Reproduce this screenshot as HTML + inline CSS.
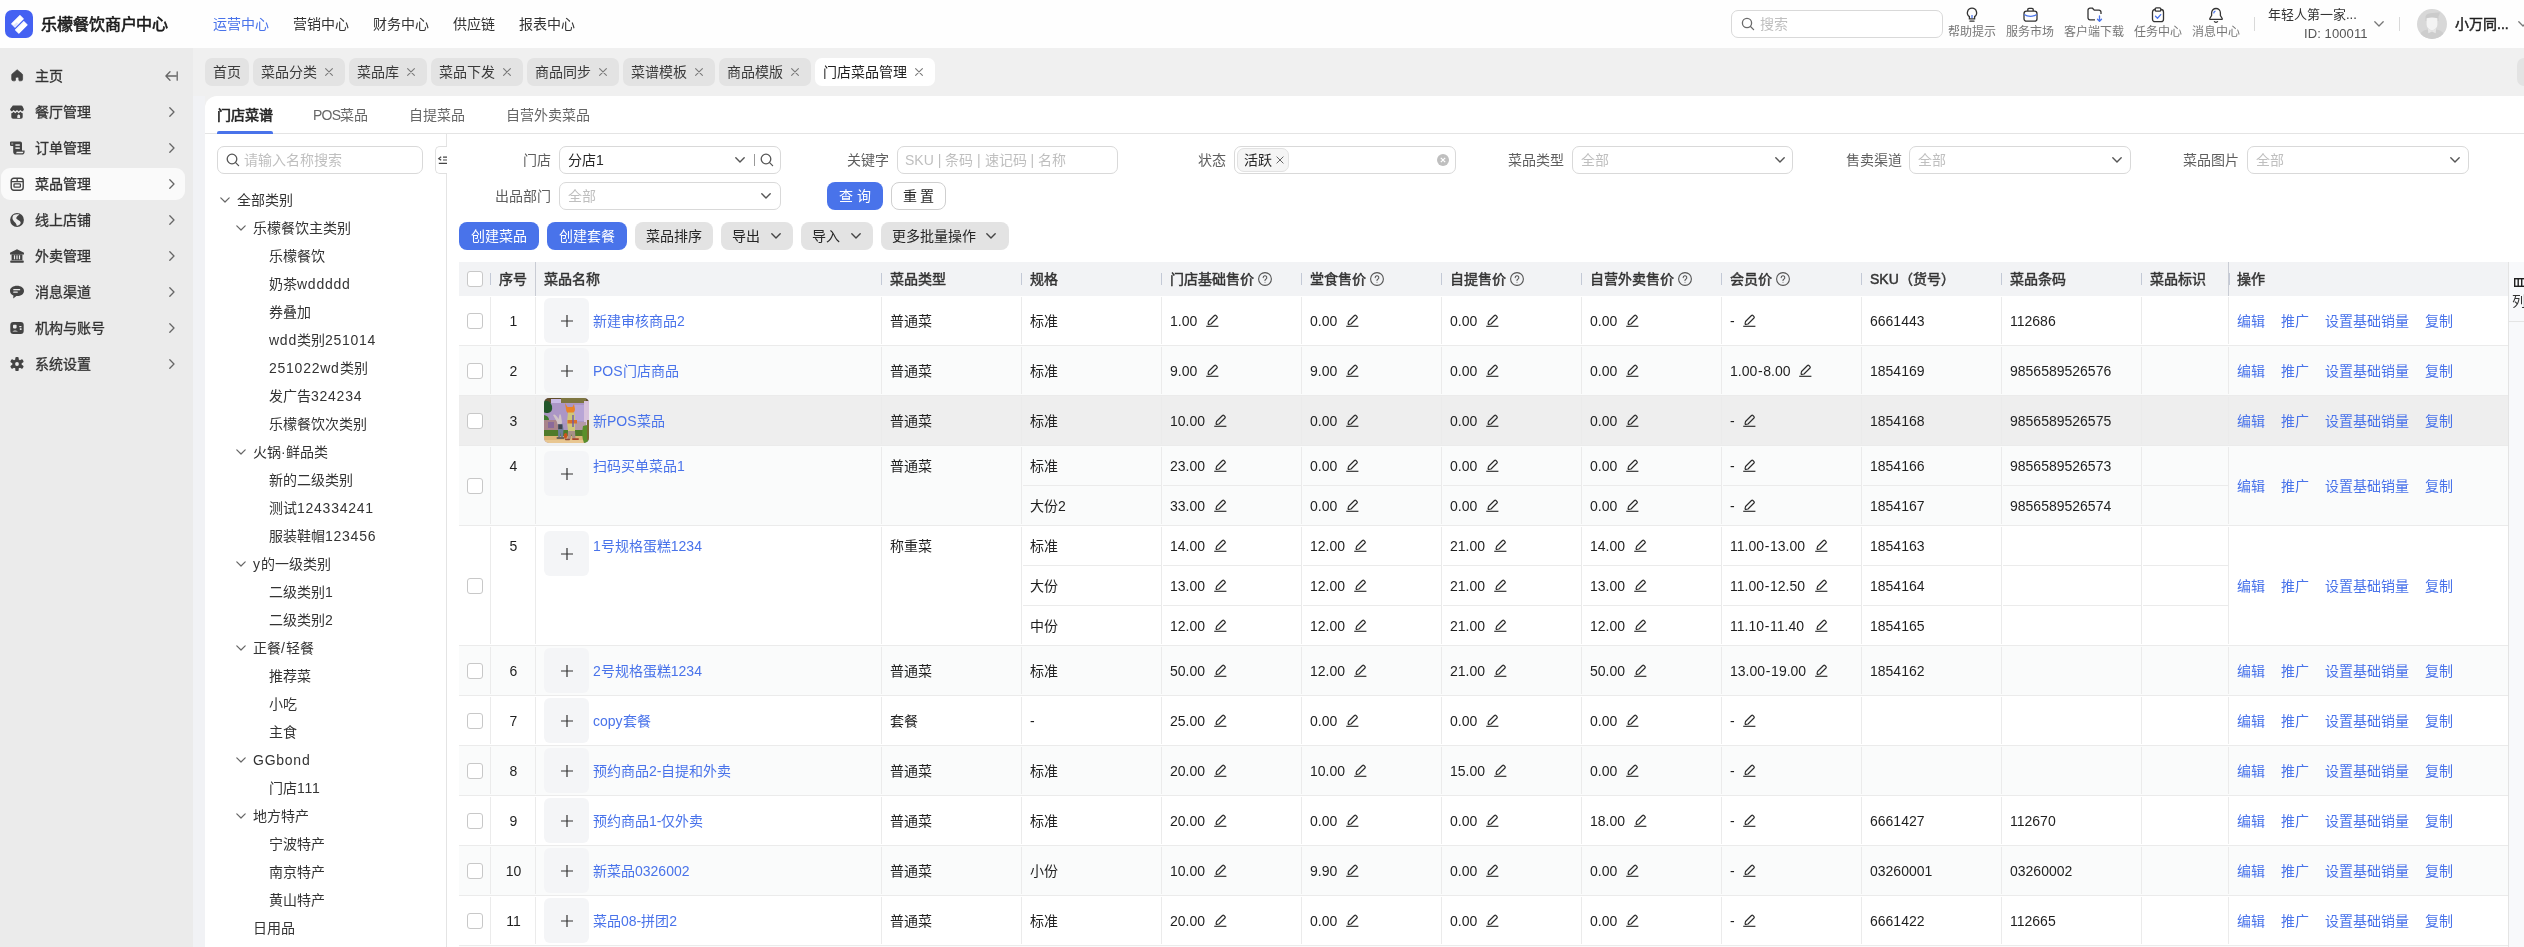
<!DOCTYPE html><html lang="zh-CN"><head><meta charset="utf-8"><title>page</title><style>
*{box-sizing:border-box;margin:0;padding:0}
html,body{width:2524px;height:947px;overflow:hidden;background:#fff}
body{font-family:"Liberation Sans",sans-serif;font-size:14px;color:#1f1f1f;position:relative;opacity:.999}
.a{position:absolute;white-space:nowrap}
.t{position:absolute;white-space:nowrap;line-height:20px;height:20px}
.hdr{left:0;top:0;width:2524px;height:48px;background:#fefefe}
.side{left:0;top:48px;width:193px;height:899px;background:#ebebeb}
.tabbar{left:193px;top:48px;width:2331px;height:48px;background:#f0f0f0}
.gap{left:193px;top:96px;width:12px;height:851px;background:#f1f2f5}
.panelbg{left:205px;top:96px;width:30px;height:30px;background:#f0f0f0}
.panel{left:205px;top:96px;width:2319px;height:851px;background:#fff;border-top-left-radius:12px}
.chip{position:absolute;top:58px;height:28px;border-radius:7px;background:#e3e3e3;color:#3a3a3a;line-height:28px;padding-left:8px;white-space:nowrap}
.chip.on{background:#fff;color:#1f1f1f}
.inp{position:absolute;height:27px;border:1px solid #d9d9d9;border-radius:7px;background:#fff}
.ph{color:#bfbfbf}
.lbl{position:absolute;color:#5e5e5e;text-align:right;line-height:20px;white-space:nowrap}
.btn{position:absolute;height:28px;border-radius:8px;line-height:28px;text-align:center;white-space:nowrap}
.btn.p{background:#4973ea;color:#fff}
.btn.g{background:#e3e3e3;color:#262626}
.th{position:absolute;top:262px;height:34px;line-height:34px;color:#333;-webkit-text-stroke:0.45px #333;white-space:nowrap}
.md{-webkit-text-stroke:0.3px currentColor}
.sb{-webkit-text-stroke:0.6px currentColor}
.cb{position:absolute;width:16px;height:16px;border:1px solid #c8c8c8;border-radius:3px;background:#fff}
.lnk{color:#4973ea}
.plus{position:absolute;width:45px;height:45px;border-radius:6px;background:#f4f5f7}
.vl{position:absolute;width:1px;background:#ebebeb}
.hl{position:absolute;height:1px;background:#ebebeb}
svg{position:absolute;overflow:visible}
</style></head><body>
<div class="a hdr"></div><div class="a side"></div><div class="a tabbar"></div><div class="a gap"></div><div class="a panelbg"></div><div class="a panel"></div>
<div class="a" style="left:5px;top:10px;width:28px;height:28px;border-radius:7px;background:#4461f2"></div>
<svg style="left:3.600px;top:8.800px" width="30.800" height="30.800" viewBox="0 0 28 28"><path d="M7 13.5 L14.5 6 L17.5 9 L10 16.5 Z" fill="#fff" stroke="#fff" stroke-width="1" stroke-linejoin="round"/><path d="M10.5 19 L18 11.5 L21 14.5 L13.5 22 Z" fill="#fff" stroke="#fff" stroke-width="1" stroke-linejoin="round"/><path d="M7 13.5 L10 16.5 L13 13.5 L11.5 12 L9 14.5Z" fill="#c9d2ff" opacity=".6"/></svg>
<div class="t sb" style="left:41px;top:15px;font-size:16px;color:#1a1a1a;letter-spacing:-0.1px">乐檬餐饮商户中心</div>
<div class="t" style="left:213px;top:14px;color:#4973ea">运营中心</div>
<div class="t" style="left:293px;top:14px;color:#333">营销中心</div>
<div class="t" style="left:373px;top:14px;color:#333">财务中心</div>
<div class="t" style="left:453px;top:14px;color:#333">供应链</div>
<div class="t" style="left:519px;top:14px;color:#333">报表中心</div>
<div class="inp" style="left:1731px;top:10px;width:212px;height:28px;border-radius:7px"></div>
<svg style="left:1741px;top:17px" width="14" height="14" viewBox="0 0 14 14" fill="none" stroke="#6a6a6a" stroke-width="1.300"><circle cx="6" cy="6" r="4.6"/><path d="M9.5 9.5L12.6 12.6" stroke-linecap="round"/></svg>
<div class="t ph" style="left:1760px;top:14px">搜索</div>
<div class="t" style="left:1948px;top:23px;font-size:12px;color:#777;line-height:18px">帮助提示</div>
<div class="t" style="left:2006px;top:23px;font-size:12px;color:#777;line-height:18px">服务市场</div>
<div class="t" style="left:2064px;top:23px;font-size:12px;color:#777;line-height:18px">客户端下载</div>
<div class="t" style="left:2134px;top:23px;font-size:12px;color:#777;line-height:18px">任务中心</div>
<div class="t" style="left:2192px;top:23px;font-size:12px;color:#777;line-height:18px">消息中心</div>
<svg style="left:1965px;top:7px" width="14" height="16" viewBox="0 0 14 16" fill="none" stroke="#333" stroke-width="1.3"><path d="M7 1.2a4.6 4.6 0 0 0-2.6 8.4v2.2h5.2V9.6A4.6 4.6 0 0 0 7 1.2z"/><path d="M5 14.2h4" stroke-linecap="round"/><path d="M7 8v3" stroke="#4973ea"/></svg>
<svg style="left:2023px;top:7px" width="15" height="16" viewBox="0 0 15 16" fill="none" stroke="#333" stroke-width="1.3"><rect x="1" y="4.2" width="13" height="10" rx="2.5"/><path d="M4.8 4V2.6a1.2 1.2 0 0 1 1.2-1.2h3a1.2 1.2 0 0 1 1.2 1.2V4"/><path d="M1.2 7.5c2 1.3 4 1.8 6.300 1.800s4.300-.5 6.300-1.800" stroke="#4973ea"/></svg>
<svg style="left:2087px;top:7px" width="16" height="16" viewBox="0 0 16 16" fill="none" stroke="#333" stroke-width="1.3"><path d="M8 12.800H3a2 2 0 0 1-2-2V3.200a2 2 0 0 1 2-2h2.500l1.800 2H12a2 2 0 0 1 2 2V7"/><path d="M12.500 9v5M10.500 12.200l2 2 2-2" stroke="#4973ea" stroke-linecap="round" stroke-linejoin="round"/></svg>
<svg style="left:2151px;top:7px" width="14" height="16" viewBox="0 0 14 16" fill="none" stroke="#333" stroke-width="1.3"><rect x="1.500" y="2.500" width="11" height="12.200" rx="2.500"/><rect x="4.200" y="0.800" width="5.600" height="3.400" rx="1.200" fill="#fff"/><path d="M4.500 9.200l2 2 3.200-3.600" stroke="#4973ea" stroke-linecap="round" stroke-linejoin="round"/></svg>
<svg style="left:2208px;top:7px" width="16" height="16" viewBox="0 0 16 16" fill="none" stroke="#333" stroke-width="1.3"><path d="M8 1.500a4.400 4.400 0 0 0-4.400 4.400v2.600L1.800 11.500v0.800h12.400v-.8L12.400 8.500V5.900A4.400 4.400 0 0 0 8 1.500z" stroke-linejoin="round"/><path d="M6.200 14.200a2 2 0 0 0 3.600 0"/><path d="M7 4.200a2.400 2.400 0 0 0-1.200 1.600" stroke="#4973ea" stroke-linecap="round"/></svg>
<div class="a" style="left:2254px;top:17px;width:1px;height:14px;background:#d9d9d9"></div>
<div class="t" style="left:2268px;top:6px;font-size:13px;color:#333;line-height:18px">年轻人第一家...</div>
<div class="t" style="left:2304px;top:25px;font-size:13px;color:#555;line-height:18px;letter-spacing:0.1px">ID: 100011</div>
<svg style="left:2374px;top:21px" width="10" height="6" viewBox="0 0 10 6" fill="none" stroke="#777" stroke-width="1.3"><path d="M0.800 0.800L5 5l4.200-4.200" stroke-linecap="round" stroke-linejoin="round"/></svg>
<div class="a" style="left:2399px;top:17px;width:1px;height:14px;background:#d9d9d9"></div>
<svg style="left:2417px;top:9px" width="30" height="30" viewBox="0 0 30 30"><defs><clipPath id="av"><circle cx="15" cy="15" r="15"/></clipPath></defs><g clip-path="url(#av)"><rect width="30" height="30" fill="#d8d8d8"/><path d="M8.500 9.500Q8 4.500 13 4.300L23 3.200Q22.500 6 21.500 7.500L21.500 12H8.500Z" fill="#cbcbcb"/><path d="M9.600 9.200Q15 7.600 20.400 9.200L20.400 15.500Q20.400 19.500 15 21.500Q9.600 19.500 9.600 15.500Z" fill="#f3f3f3"/><path d="M2 30Q2 21.500 10.500 20.500L15 22.500L19.500 20.500Q28 21.500 28 30Z" fill="#cdcdcd"/><path d="M10.800 19.600L15 21.800L19.200 19.600L18.600 24.200L15 22.600L11.400 24.200Z" fill="#e6e6e6"/></g></svg>
<div class="t" style="left:2455px;top:14px;color:#1f1f1f;-webkit-text-stroke:.45px #1f1f1f">小万同...</div>
<svg style="left:2518px;top:21px" width="10" height="6" viewBox="0 0 10 6" fill="none" stroke="#777" stroke-width="1.3"><path d="M0.800 0.800L5 5l4.200-4.200" stroke-linecap="round" stroke-linejoin="round"/></svg>
<div class="a" style="left:1px;top:168px;width:184px;height:32px;border-radius:9px;background:#fafafa"></div>
<svg style="left:10.900px;top:69px" width="12.300" height="12.800" viewBox="0 0 14 14"><path d="M7 .6L12.700 5.300Q13.200 5.800 13.200 6.600V11.400Q13.200 13.200 11.400 13.200H9.800Q8.900 13.200 8.900 12.300V10.700Q8.900 8.900 7 8.900Q5.100 8.900 5.100 10.700V12.300Q5.100 13.200 4.200 13.200H2.600Q.8 13.200 .8 11.400V6.600Q.8 5.800 1.300 5.300Z" fill="#444" stroke="#444" stroke-width=".8" stroke-linejoin="round"/></svg>
<div class="t md" style="left:35px;top:66px;color:#333">主页</div>
<svg style="left:165px;top:71px" width="13" height="10" viewBox="0 0 13 10" fill="none" stroke="#666" stroke-width="1.300"><path d="M5 .8L.9 5 5 9.200M1 5h10M12.200 .8v8.400" stroke-linecap="round" stroke-linejoin="round"/></svg>
<svg style="left:10px;top:105px" width="14" height="14" viewBox="0 0 14 14"><path d="M2.800 .4H11.200Q12.100 .4 12.500 1.200L13.800 4Q14.100 4.900 13.400 5.500L12.100 6.600 10.400 5.100 8.700 6.600 7 5.100 5.300 6.600 3.600 5.100 1.900 6.600 .6 5.500Q-.1 4.900 .2 4Z" fill="#444"/><path d="M1.300 7.900L1.900 8.300 3.600 6.800 5.300 8.300 7 6.800 8.700 8.300 10.400 6.800 12.100 8.300 12.700 7.900V12Q12.700 13.800 10.900 13.800H3.100Q1.300 13.800 1.300 12Z" fill="#444"/><path d="M7.300 13V10.400L8.700 9.300 10.100 10.400V13Z" fill="#ebebeb"/></svg>
<div class="t md" style="left:35px;top:102px;color:#333">餐厅管理</div>
<svg style="left:169px;top:107px" width="6" height="10" viewBox="0 0 6 10" fill="none" stroke="#666" stroke-width="1.300"><path d="M.8.800L5 5 .8 9.200" stroke-linecap="round" stroke-linejoin="round"/></svg>
<svg style="left:10px;top:141px" width="14" height="14" viewBox="0 0 14 14"><path d="M0 1.600Q0 .4 1.200 .4H10.200Q12 .4 12 2.200V9.400H14.600V10.800Q14.600 13.600 11.800 13.600H6Q3.200 13.600 3.200 10.800V5H1.200Q0 5 0 3.800Z" fill="#444"/><path d="M1.300 1.700V3.800H3.200V1.700Z" fill="#8a8a8a"/><rect x="5.400" y="3.300" width="4.400" height="1.500" fill="#ebebeb"/><rect x="5.400" y="6.400" width="4.400" height="1.500" fill="#ebebeb"/><path d="M6.600 10.800H13.300V11Q13.300 12.300 12 12.300H5.800Q6.600 11.800 6.600 10.800Z" fill="#ebebeb"/></svg>
<div class="t md" style="left:35px;top:138px;color:#333">订单管理</div>
<svg style="left:169px;top:143px" width="6" height="10" viewBox="0 0 6 10" fill="none" stroke="#666" stroke-width="1.300"><path d="M.8.800L5 5 .8 9.200" stroke-linecap="round" stroke-linejoin="round"/></svg>
<svg style="left:10px;top:177px" width="14" height="14" viewBox="0 0 14 14"><rect x="1.200" y="1.200" width="12" height="12" rx="2.600" fill="none" stroke="#444" stroke-width="1.400"/><path d="M1.200 4.700h12M7.200 1.200v3.500" stroke="#444" stroke-width="1.300"/><rect x="4" y="6.800" width="6.400" height="3.400" rx=".8" fill="none" stroke="#444" stroke-width="1.300"/></svg>
<div class="t md" style="left:35px;top:174px;color:#333">菜品管理</div>
<svg style="left:169px;top:179px" width="6" height="10" viewBox="0 0 6 10" fill="none" stroke="#666" stroke-width="1.300"><path d="M.8.800L5 5 .8 9.200" stroke-linecap="round" stroke-linejoin="round"/></svg>
<svg style="left:10px;top:213px" width="14" height="14" viewBox="0 0 14 14"><circle cx="7" cy="7" r="6.900" fill="#444"/><path d="M3.600 1.900C5 1.300 7.800 .9 9.400 1.400 8.200 2.400 6.600 3.400 6.300 4.800 6.100 6.200 7.600 6.600 8.900 7.400 10.200 8.200 11 9 10.600 10.200 10.200 11.600 8.400 12.600 6.800 12.900 6.800 11.400 5.800 10.400 4.800 9.200 3.600 7.800 2.200 6.600 2.400 4.800 2.500 3.600 2.900 2.600 3.600 1.900Z" fill="#ebebeb"/></svg>
<div class="t md" style="left:35px;top:210px;color:#333">线上店铺</div>
<svg style="left:169px;top:215px" width="6" height="10" viewBox="0 0 6 10" fill="none" stroke="#666" stroke-width="1.300"><path d="M.8.800L5 5 .8 9.200" stroke-linecap="round" stroke-linejoin="round"/></svg>
<svg style="left:10px;top:249px" width="14" height="14" viewBox="0 0 14 14"><path d="M7 .2L13.600 3.600Q14 3.900 14 4.400V5.400H0V4.400Q0 3.900 .4 3.600Z" fill="#444"/><rect x="1.600" y="5.400" width="10.800" height="5.800" fill="#444"/><rect x="3.900" y="6.300" width="1.200" height="4" fill="#ebebeb"/><rect x="6.400" y="6.300" width="1.200" height="4" fill="#ebebeb"/><rect x="8.900" y="6.300" width="1.200" height="4" fill="#ebebeb"/><rect x=".2" y="11.400" width="13.600" height="2.300" rx=".8" fill="#444"/></svg>
<div class="t md" style="left:35px;top:246px;color:#333">外卖管理</div>
<svg style="left:169px;top:251px" width="6" height="10" viewBox="0 0 6 10" fill="none" stroke="#666" stroke-width="1.300"><path d="M.8.800L5 5 .8 9.200" stroke-linecap="round" stroke-linejoin="round"/></svg>
<svg style="left:10px;top:285px" width="14" height="14" viewBox="0 0 14 14"><path d="M7 .8C3 .8 0 2.900 0 5.900 0 7.900 1.400 9.500 3.400 10.400L3.200 13.600 6.400 11C6.600 11 6.800 11 7 11 11 11 14 8.900 14 5.900S11 .8 7 .8Z" fill="#444"/><rect x="3.200" y="3.900" width="7" height="1.300" rx=".5" fill="#ebebeb"/><rect x="3.200" y="6.400" width="4.600" height="1.300" rx=".5" fill="#ebebeb"/></svg>
<div class="t md" style="left:35px;top:282px;color:#333">消息渠道</div>
<svg style="left:169px;top:287px" width="6" height="10" viewBox="0 0 6 10" fill="none" stroke="#666" stroke-width="1.300"><path d="M.8.800L5 5 .8 9.200" stroke-linecap="round" stroke-linejoin="round"/></svg>
<svg style="left:10px;top:321px" width="14" height="14" viewBox="0 0 14 14"><rect x=".3" y="1" width="13.400" height="12" rx="3" fill="#444"/><rect x="3" y="3.800" width="3.600" height="3.600" rx=".8" fill="#ebebeb"/><path d="M2.400 10.600Q4.800 8.600 8 10.600Z" fill="#ebebeb"/><rect x="9.200" y="5" width="2.400" height="1.200" rx=".4" fill="#ebebeb"/><rect x="9.800" y="7.200" width="1.800" height="1.800" rx=".4" fill="#ebebeb"/></svg>
<div class="t md" style="left:35px;top:318px;color:#333">机构与账号</div>
<svg style="left:169px;top:323px" width="6" height="10" viewBox="0 0 6 10" fill="none" stroke="#666" stroke-width="1.300"><path d="M.8.800L5 5 .8 9.200" stroke-linecap="round" stroke-linejoin="round"/></svg>
<svg style="left:10px;top:357px" width="14" height="14" viewBox="0 0 14 14"><g fill="#444"><circle cx="7" cy="7" r="4.700"/><rect x="5.300" y="-.1" width="3.400" height="14.200" rx="1.200"/><rect x="5.300" y="-.1" width="3.400" height="14.200" rx="1.200" transform="rotate(60 7 7)"/><rect x="5.300" y="-.1" width="3.400" height="14.200" rx="1.200" transform="rotate(120 7 7)"/></g><circle cx="7" cy="7" r="1.900" fill="#ebebeb"/></svg>
<div class="t md" style="left:35px;top:354px;color:#333">系统设置</div>
<svg style="left:169px;top:359px" width="6" height="10" viewBox="0 0 6 10" fill="none" stroke="#666" stroke-width="1.300"><path d="M.8.800L5 5 .8 9.200" stroke-linecap="round" stroke-linejoin="round"/></svg>
<div class="chip" style="left:205px;width:44px">首页</div>
<div class="chip" style="left:253px;width:92px">菜品分类</div>
<svg style="left:325px;top:68px" width="8" height="8" viewBox="0 0 8 8" fill="none" stroke="#7a7a7a" stroke-width="1.100"><path d="M.6.600l6.800 6.800M7.400.600L.6 7.400" stroke-linecap="round"/></svg>
<div class="chip" style="left:349px;width:78px">菜品库</div>
<svg style="left:407px;top:68px" width="8" height="8" viewBox="0 0 8 8" fill="none" stroke="#7a7a7a" stroke-width="1.100"><path d="M.6.600l6.800 6.800M7.400.600L.6 7.400" stroke-linecap="round"/></svg>
<div class="chip" style="left:431px;width:92px">菜品下发</div>
<svg style="left:503px;top:68px" width="8" height="8" viewBox="0 0 8 8" fill="none" stroke="#7a7a7a" stroke-width="1.100"><path d="M.6.600l6.800 6.800M7.400.600L.6 7.400" stroke-linecap="round"/></svg>
<div class="chip" style="left:527px;width:92px">商品同步</div>
<svg style="left:599px;top:68px" width="8" height="8" viewBox="0 0 8 8" fill="none" stroke="#7a7a7a" stroke-width="1.100"><path d="M.6.600l6.800 6.800M7.400.600L.6 7.400" stroke-linecap="round"/></svg>
<div class="chip" style="left:623px;width:92px">菜谱模板</div>
<svg style="left:695px;top:68px" width="8" height="8" viewBox="0 0 8 8" fill="none" stroke="#7a7a7a" stroke-width="1.100"><path d="M.6.600l6.800 6.800M7.400.600L.6 7.400" stroke-linecap="round"/></svg>
<div class="chip" style="left:719px;width:92px">商品模版</div>
<svg style="left:791px;top:68px" width="8" height="8" viewBox="0 0 8 8" fill="none" stroke="#7a7a7a" stroke-width="1.100"><path d="M.6.600l6.800 6.800M7.400.600L.6 7.400" stroke-linecap="round"/></svg>
<div class="chip on" style="left:815px;width:120px">门店菜品管理</div>
<svg style="left:915px;top:68px" width="8" height="8" viewBox="0 0 8 8" fill="none" stroke="#7a7a7a" stroke-width="1.100"><path d="M.6.600l6.800 6.800M7.400.600L.6 7.400" stroke-linecap="round"/></svg>
<div class="a" style="left:2517px;top:58px;width:20px;height:28px;border-radius:7px;background:#e3e3e3"></div>
<div class="a" style="left:205px;top:133px;width:2319px;height:1px;background:#e4e4e4"></div>
<div class="t sb" style="left:217px;top:105px;color:#262626">门店菜谱</div>
<div class="a" style="left:217px;top:131px;width:56px;height:3px;background:#4973ea;border-radius:2px 2px 0 0"></div>
<div class="t" style="left:313px;top:105px;color:#666"><span style="letter-spacing:-.8px">POS</span>菜品</div>
<div class="t" style="left:409px;top:105px;color:#666">自提菜品</div>
<div class="t" style="left:506px;top:105px;color:#666">自营外卖菜品</div>
<div class="a" style="left:446px;top:134px;width:1px;height:813px;background:#e4e4e4"></div>
<div class="inp" style="left:217px;top:146px;width:206px;height:28px"></div>
<svg style="left:226px;top:153px" width="14" height="14" viewBox="0 0 14 14" fill="none" stroke="#555" stroke-width="1.300"><circle cx="6" cy="6" r="4.800"/><path d="M9.600 9.600L12.600 12.600" stroke-linecap="round"/></svg>
<div class="t ph" style="left:244px;top:150px">请输入名称搜索</div>
<div class="a" style="left:435px;top:146px;width:12px;height:28px;border:1px solid #e0e0e0;border-right:none;border-radius:5px 0 0 5px;background:#fff"></div>
<svg style="left:438px;top:156px" width="9" height="8" viewBox="0 0 9 8" fill="none" stroke="#444" stroke-width="1.200"><path d="M3.200 .8L.8 2.600 3.200 4.200M5 1.200h4M5 4h4M.8 7.400h8.200"/></svg>
<div class="t" style="left:237px;top:190px;color:#333">全部类别</div>
<svg style="left:220px;top:197px" width="10" height="6" viewBox="0 0 10 6" fill="none" stroke="#666" stroke-width="1.200"><path d="M.8.800L5 5l4.200-4.200" stroke-linecap="round" stroke-linejoin="round"/></svg>
<div class="t" style="left:253px;top:218px;color:#333">乐檬餐饮主类别</div>
<svg style="left:236px;top:225px" width="10" height="6" viewBox="0 0 10 6" fill="none" stroke="#666" stroke-width="1.200"><path d="M.8.800L5 5l4.200-4.200" stroke-linecap="round" stroke-linejoin="round"/></svg>
<div class="t" style="left:269px;top:246px;color:#333">乐檬餐饮</div>
<div class="t" style="left:269px;top:274px;color:#333">奶茶<span style="letter-spacing:.75px">wddddd</span></div>
<div class="t" style="left:269px;top:302px;color:#333">券叠加</div>
<div class="t" style="left:269px;top:330px;color:#333"><span style="letter-spacing:.75px">wdd</span>类别<span style="letter-spacing:.75px">251014</span></div>
<div class="t" style="left:269px;top:358px;color:#333"><span style="letter-spacing:.75px">251022wd</span>类别</div>
<div class="t" style="left:269px;top:386px;color:#333">发广告<span style="letter-spacing:.75px">324234</span></div>
<div class="t" style="left:269px;top:414px;color:#333">乐檬餐饮次类别</div>
<div class="t" style="left:253px;top:442px;color:#333">火锅·鲜品类</div>
<svg style="left:236px;top:449px" width="10" height="6" viewBox="0 0 10 6" fill="none" stroke="#666" stroke-width="1.200"><path d="M.8.800L5 5l4.200-4.200" stroke-linecap="round" stroke-linejoin="round"/></svg>
<div class="t" style="left:269px;top:470px;color:#333">新的二级类别</div>
<div class="t" style="left:269px;top:498px;color:#333">测试<span style="letter-spacing:.75px">124334241</span></div>
<div class="t" style="left:269px;top:526px;color:#333">服装鞋帽<span style="letter-spacing:.75px">123456</span></div>
<div class="t" style="left:253px;top:554px;color:#333"><span style="letter-spacing:.75px">y</span>的一级类别</div>
<svg style="left:236px;top:561px" width="10" height="6" viewBox="0 0 10 6" fill="none" stroke="#666" stroke-width="1.200"><path d="M.8.800L5 5l4.200-4.200" stroke-linecap="round" stroke-linejoin="round"/></svg>
<div class="t" style="left:269px;top:582px;color:#333">二级类别<span style="letter-spacing:.75px">1</span></div>
<div class="t" style="left:269px;top:610px;color:#333">二级类别<span style="letter-spacing:.75px">2</span></div>
<div class="t" style="left:253px;top:638px;color:#333">正餐<span style="letter-spacing:.75px">/</span>轻餐</div>
<svg style="left:236px;top:645px" width="10" height="6" viewBox="0 0 10 6" fill="none" stroke="#666" stroke-width="1.200"><path d="M.8.800L5 5l4.200-4.200" stroke-linecap="round" stroke-linejoin="round"/></svg>
<div class="t" style="left:269px;top:666px;color:#333">推荐菜</div>
<div class="t" style="left:269px;top:694px;color:#333">小吃</div>
<div class="t" style="left:269px;top:722px;color:#333">主食</div>
<div class="t" style="left:253px;top:750px;color:#333"><span style="letter-spacing:.75px">GGbond</span></div>
<svg style="left:236px;top:757px" width="10" height="6" viewBox="0 0 10 6" fill="none" stroke="#666" stroke-width="1.200"><path d="M.8.800L5 5l4.200-4.200" stroke-linecap="round" stroke-linejoin="round"/></svg>
<div class="t" style="left:269px;top:778px;color:#333">门店<span style="letter-spacing:.75px">111</span></div>
<div class="t" style="left:253px;top:806px;color:#333">地方特产</div>
<svg style="left:236px;top:813px" width="10" height="6" viewBox="0 0 10 6" fill="none" stroke="#666" stroke-width="1.200"><path d="M.8.800L5 5l4.200-4.200" stroke-linecap="round" stroke-linejoin="round"/></svg>
<div class="t" style="left:269px;top:834px;color:#333">宁波特产</div>
<div class="t" style="left:269px;top:862px;color:#333">南京特产</div>
<div class="t" style="left:269px;top:890px;color:#333">黄山特产</div>
<div class="t" style="left:253px;top:918px;color:#333">日用品</div>
<div class="lbl" style="left:451px;width:100px;top:150px">门店</div>
<div class="inp" style="left:559px;top:146px;width:222px;height:28px"></div>
<div class="lbl" style="left:789px;width:100px;top:150px">关键字</div>
<div class="inp" style="left:897px;top:146px;width:221px;height:28px"></div>
<div class="lbl" style="left:1126px;width:100px;top:150px">状态</div>
<div class="inp" style="left:1234px;top:146px;width:222px;height:28px"></div>
<div class="lbl" style="left:1464px;width:100px;top:150px">菜品类型</div>
<div class="inp" style="left:1572px;top:146px;width:221px;height:28px"></div>
<div class="lbl" style="left:1802px;width:100px;top:150px">售卖渠道</div>
<div class="inp" style="left:1909px;top:146px;width:222px;height:28px"></div>
<div class="lbl" style="left:2139px;width:100px;top:150px">菜品图片</div>
<div class="inp" style="left:2247px;top:146px;width:222px;height:28px"></div>
<div class="t" style="left:568px;top:150px;color:#262626">分店1</div>
<svg style="left:735px;top:157px" width="10" height="6" viewBox="0 0 10 6" fill="none" stroke="#555" stroke-width="1.400"><path d="M.8.800L5 5l4.200-4.200" stroke-linecap="round" stroke-linejoin="round"/></svg>
<div class="a" style="left:754px;top:154px;width:1px;height:12px;background:#999"></div>
<svg style="left:760px;top:153px" width="14" height="14" viewBox="0 0 14 14" fill="none" stroke="#555" stroke-width="1.300"><circle cx="6" cy="6" r="4.800"/><path d="M9.600 9.600L12.600 12.600" stroke-linecap="round"/></svg>
<div class="t ph" style="left:905px;top:150px">SKU | 条码 | 速记码 | 名称</div>
<div class="a" style="left:1237px;top:148px;width:52px;height:24px;border-radius:7px;background:#f5f5f5;border:1px solid #e2e2e2"></div>
<div class="t" style="left:1244px;top:150px;color:#262626">活跃</div>
<svg style="left:1276px;top:156px" width="8" height="8" viewBox="0 0 8 8" fill="none" stroke="#666" stroke-width="1"><path d="M.6.600l6.800 6.800M7.400.600L.6 7.400"/></svg>
<div class="a" style="left:1437px;top:154px;width:12px;height:12px;border-radius:6px;background:#bfbfbf"></div>
<svg style="left:1440px;top:157px" width="6" height="6" viewBox="0 0 6 6" fill="none" stroke="#fff" stroke-width="1.200"><path d="M.8.800l4.400 4.400M5.200.800L.8 5.200"/></svg>
<div class="t ph" style="left:1581px;top:150px">全部</div>
<svg style="left:1775px;top:157px" width="10" height="6" viewBox="0 0 10 6" fill="none" stroke="#555" stroke-width="1.400"><path d="M.8.800L5 5l4.200-4.200" stroke-linecap="round" stroke-linejoin="round"/></svg>
<div class="t ph" style="left:1918px;top:150px">全部</div>
<svg style="left:2112px;top:157px" width="10" height="6" viewBox="0 0 10 6" fill="none" stroke="#555" stroke-width="1.400"><path d="M.8.800L5 5l4.200-4.200" stroke-linecap="round" stroke-linejoin="round"/></svg>
<div class="t ph" style="left:2256px;top:150px">全部</div>
<svg style="left:2450px;top:157px" width="10" height="6" viewBox="0 0 10 6" fill="none" stroke="#555" stroke-width="1.400"><path d="M.8.800L5 5l4.200-4.200" stroke-linecap="round" stroke-linejoin="round"/></svg>
<div class="lbl" style="left:451px;width:100px;top:186px">出品部门</div>
<div class="inp" style="left:559px;top:182px;width:222px;height:28px"></div>
<div class="t ph" style="left:568px;top:186px">全部</div>
<svg style="left:761px;top:193px" width="10" height="6" viewBox="0 0 10 6" fill="none" stroke="#555" stroke-width="1.400"><path d="M.8.800L5 5l4.200-4.200" stroke-linecap="round" stroke-linejoin="round"/></svg>
<div class="btn p" style="left:827px;top:182px;width:56px">查 询</div>
<div class="btn" style="left:891px;top:182px;width:55px;border:1px solid #cfcfcf;background:#fff;line-height:26px;color:#262626">重 置</div>
<div class="btn p" style="left:459px;top:222px;width:80px">创建菜品</div>
<div class="btn p" style="left:547px;top:222px;width:80px">创建套餐</div>
<div class="btn g" style="left:635px;top:222px;width:78px">菜品排序</div>
<div class="btn g" style="left:721px;top:222px;width:72px;text-align:left;padding-left:11px">导出</div>
<svg style="left:771px;top:233px" width="10" height="6" viewBox="0 0 10 6" fill="none" stroke="#444" stroke-width="1.400"><path d="M.8.800L5 5l4.200-4.200" stroke-linecap="round" stroke-linejoin="round"/></svg>
<div class="btn g" style="left:801px;top:222px;width:72px;text-align:left;padding-left:11px">导入</div>
<svg style="left:851px;top:233px" width="10" height="6" viewBox="0 0 10 6" fill="none" stroke="#444" stroke-width="1.400"><path d="M.8.800L5 5l4.200-4.200" stroke-linecap="round" stroke-linejoin="round"/></svg>
<div class="btn g" style="left:881px;top:222px;width:128px;text-align:left;padding-left:11px">更多批量操作</div>
<svg style="left:986px;top:233px" width="10" height="6" viewBox="0 0 10 6" fill="none" stroke="#444" stroke-width="1.400"><path d="M.8.800L5 5l4.200-4.200" stroke-linecap="round" stroke-linejoin="round"/></svg>
<div class="a" style="left:459px;top:262px;width:2049px;height:34px;background:#f2f3f5"></div>
<div class="a" style="left:459px;top:296px;width:2049px;height:50px;background:#fff"></div>
<div class="hl" style="left:459px;top:345px;width:2049px"></div>
<div class="a" style="left:459px;top:346px;width:2049px;height:50px;background:#fafbfb"></div>
<div class="hl" style="left:459px;top:395px;width:2049px"></div>
<div class="a" style="left:459px;top:396px;width:2049px;height:50px;background:#eeeeee"></div>
<div class="hl" style="left:459px;top:445px;width:2049px"></div>
<div class="a" style="left:459px;top:446px;width:2049px;height:80px;background:#fafbfb"></div>
<div class="hl" style="left:459px;top:525px;width:2049px"></div>
<div class="a" style="left:459px;top:526px;width:2049px;height:120px;background:#fff"></div>
<div class="hl" style="left:459px;top:645px;width:2049px"></div>
<div class="a" style="left:459px;top:646px;width:2049px;height:50px;background:#fafbfb"></div>
<div class="hl" style="left:459px;top:695px;width:2049px"></div>
<div class="a" style="left:459px;top:696px;width:2049px;height:50px;background:#fff"></div>
<div class="hl" style="left:459px;top:745px;width:2049px"></div>
<div class="a" style="left:459px;top:746px;width:2049px;height:50px;background:#fafbfb"></div>
<div class="hl" style="left:459px;top:795px;width:2049px"></div>
<div class="a" style="left:459px;top:796px;width:2049px;height:50px;background:#fff"></div>
<div class="hl" style="left:459px;top:845px;width:2049px"></div>
<div class="a" style="left:459px;top:846px;width:2049px;height:50px;background:#fafbfb"></div>
<div class="hl" style="left:459px;top:895px;width:2049px"></div>
<div class="a" style="left:459px;top:896px;width:2049px;height:50px;background:#fff"></div>
<div class="hl" style="left:459px;top:945px;width:2049px"></div>
<div class="a" style="left:459px;top:946px;width:2049px;height:50px;background:#fafbfb"></div>
<div class="hl" style="left:459px;top:995px;width:2049px"></div>
<div class="vl" style="left:490px;top:297px;height:47px"></div>
<div class="vl" style="left:535px;top:297px;height:47px"></div>
<div class="vl" style="left:881px;top:297px;height:47px"></div>
<div class="vl" style="left:1021px;top:297px;height:47px"></div>
<div class="vl" style="left:1161px;top:297px;height:47px"></div>
<div class="vl" style="left:1301px;top:297px;height:47px"></div>
<div class="vl" style="left:1441px;top:297px;height:47px"></div>
<div class="vl" style="left:1581px;top:297px;height:47px"></div>
<div class="vl" style="left:1721px;top:297px;height:47px"></div>
<div class="vl" style="left:1861px;top:297px;height:47px"></div>
<div class="vl" style="left:2001px;top:297px;height:47px"></div>
<div class="vl" style="left:2141px;top:297px;height:47px"></div>
<div class="vl" style="left:2228px;top:297px;height:47px"></div>
<div class="vl" style="left:490px;top:347px;height:47px"></div>
<div class="vl" style="left:535px;top:347px;height:47px"></div>
<div class="vl" style="left:881px;top:347px;height:47px"></div>
<div class="vl" style="left:1021px;top:347px;height:47px"></div>
<div class="vl" style="left:1161px;top:347px;height:47px"></div>
<div class="vl" style="left:1301px;top:347px;height:47px"></div>
<div class="vl" style="left:1441px;top:347px;height:47px"></div>
<div class="vl" style="left:1581px;top:347px;height:47px"></div>
<div class="vl" style="left:1721px;top:347px;height:47px"></div>
<div class="vl" style="left:1861px;top:347px;height:47px"></div>
<div class="vl" style="left:2001px;top:347px;height:47px"></div>
<div class="vl" style="left:2141px;top:347px;height:47px"></div>
<div class="vl" style="left:2228px;top:347px;height:47px"></div>
<div class="vl" style="left:490px;top:397px;height:47px"></div>
<div class="vl" style="left:535px;top:397px;height:47px"></div>
<div class="vl" style="left:881px;top:397px;height:47px"></div>
<div class="vl" style="left:1021px;top:397px;height:47px"></div>
<div class="vl" style="left:1161px;top:397px;height:47px"></div>
<div class="vl" style="left:1301px;top:397px;height:47px"></div>
<div class="vl" style="left:1441px;top:397px;height:47px"></div>
<div class="vl" style="left:1581px;top:397px;height:47px"></div>
<div class="vl" style="left:1721px;top:397px;height:47px"></div>
<div class="vl" style="left:1861px;top:397px;height:47px"></div>
<div class="vl" style="left:2001px;top:397px;height:47px"></div>
<div class="vl" style="left:2141px;top:397px;height:47px"></div>
<div class="vl" style="left:2228px;top:397px;height:47px"></div>
<div class="vl" style="left:490px;top:447px;height:77px"></div>
<div class="vl" style="left:535px;top:447px;height:77px"></div>
<div class="vl" style="left:881px;top:447px;height:77px"></div>
<div class="vl" style="left:1021px;top:447px;height:77px"></div>
<div class="vl" style="left:1161px;top:447px;height:77px"></div>
<div class="vl" style="left:1301px;top:447px;height:77px"></div>
<div class="vl" style="left:1441px;top:447px;height:77px"></div>
<div class="vl" style="left:1581px;top:447px;height:77px"></div>
<div class="vl" style="left:1721px;top:447px;height:77px"></div>
<div class="vl" style="left:1861px;top:447px;height:77px"></div>
<div class="vl" style="left:2001px;top:447px;height:77px"></div>
<div class="vl" style="left:2141px;top:447px;height:77px"></div>
<div class="vl" style="left:2228px;top:447px;height:77px"></div>
<div class="vl" style="left:490px;top:527px;height:117px"></div>
<div class="vl" style="left:535px;top:527px;height:117px"></div>
<div class="vl" style="left:881px;top:527px;height:117px"></div>
<div class="vl" style="left:1021px;top:527px;height:117px"></div>
<div class="vl" style="left:1161px;top:527px;height:117px"></div>
<div class="vl" style="left:1301px;top:527px;height:117px"></div>
<div class="vl" style="left:1441px;top:527px;height:117px"></div>
<div class="vl" style="left:1581px;top:527px;height:117px"></div>
<div class="vl" style="left:1721px;top:527px;height:117px"></div>
<div class="vl" style="left:1861px;top:527px;height:117px"></div>
<div class="vl" style="left:2001px;top:527px;height:117px"></div>
<div class="vl" style="left:2141px;top:527px;height:117px"></div>
<div class="vl" style="left:2228px;top:527px;height:117px"></div>
<div class="vl" style="left:490px;top:647px;height:47px"></div>
<div class="vl" style="left:535px;top:647px;height:47px"></div>
<div class="vl" style="left:881px;top:647px;height:47px"></div>
<div class="vl" style="left:1021px;top:647px;height:47px"></div>
<div class="vl" style="left:1161px;top:647px;height:47px"></div>
<div class="vl" style="left:1301px;top:647px;height:47px"></div>
<div class="vl" style="left:1441px;top:647px;height:47px"></div>
<div class="vl" style="left:1581px;top:647px;height:47px"></div>
<div class="vl" style="left:1721px;top:647px;height:47px"></div>
<div class="vl" style="left:1861px;top:647px;height:47px"></div>
<div class="vl" style="left:2001px;top:647px;height:47px"></div>
<div class="vl" style="left:2141px;top:647px;height:47px"></div>
<div class="vl" style="left:2228px;top:647px;height:47px"></div>
<div class="vl" style="left:490px;top:697px;height:47px"></div>
<div class="vl" style="left:535px;top:697px;height:47px"></div>
<div class="vl" style="left:881px;top:697px;height:47px"></div>
<div class="vl" style="left:1021px;top:697px;height:47px"></div>
<div class="vl" style="left:1161px;top:697px;height:47px"></div>
<div class="vl" style="left:1301px;top:697px;height:47px"></div>
<div class="vl" style="left:1441px;top:697px;height:47px"></div>
<div class="vl" style="left:1581px;top:697px;height:47px"></div>
<div class="vl" style="left:1721px;top:697px;height:47px"></div>
<div class="vl" style="left:1861px;top:697px;height:47px"></div>
<div class="vl" style="left:2001px;top:697px;height:47px"></div>
<div class="vl" style="left:2141px;top:697px;height:47px"></div>
<div class="vl" style="left:2228px;top:697px;height:47px"></div>
<div class="vl" style="left:490px;top:747px;height:47px"></div>
<div class="vl" style="left:535px;top:747px;height:47px"></div>
<div class="vl" style="left:881px;top:747px;height:47px"></div>
<div class="vl" style="left:1021px;top:747px;height:47px"></div>
<div class="vl" style="left:1161px;top:747px;height:47px"></div>
<div class="vl" style="left:1301px;top:747px;height:47px"></div>
<div class="vl" style="left:1441px;top:747px;height:47px"></div>
<div class="vl" style="left:1581px;top:747px;height:47px"></div>
<div class="vl" style="left:1721px;top:747px;height:47px"></div>
<div class="vl" style="left:1861px;top:747px;height:47px"></div>
<div class="vl" style="left:2001px;top:747px;height:47px"></div>
<div class="vl" style="left:2141px;top:747px;height:47px"></div>
<div class="vl" style="left:2228px;top:747px;height:47px"></div>
<div class="vl" style="left:490px;top:797px;height:47px"></div>
<div class="vl" style="left:535px;top:797px;height:47px"></div>
<div class="vl" style="left:881px;top:797px;height:47px"></div>
<div class="vl" style="left:1021px;top:797px;height:47px"></div>
<div class="vl" style="left:1161px;top:797px;height:47px"></div>
<div class="vl" style="left:1301px;top:797px;height:47px"></div>
<div class="vl" style="left:1441px;top:797px;height:47px"></div>
<div class="vl" style="left:1581px;top:797px;height:47px"></div>
<div class="vl" style="left:1721px;top:797px;height:47px"></div>
<div class="vl" style="left:1861px;top:797px;height:47px"></div>
<div class="vl" style="left:2001px;top:797px;height:47px"></div>
<div class="vl" style="left:2141px;top:797px;height:47px"></div>
<div class="vl" style="left:2228px;top:797px;height:47px"></div>
<div class="vl" style="left:490px;top:847px;height:47px"></div>
<div class="vl" style="left:535px;top:847px;height:47px"></div>
<div class="vl" style="left:881px;top:847px;height:47px"></div>
<div class="vl" style="left:1021px;top:847px;height:47px"></div>
<div class="vl" style="left:1161px;top:847px;height:47px"></div>
<div class="vl" style="left:1301px;top:847px;height:47px"></div>
<div class="vl" style="left:1441px;top:847px;height:47px"></div>
<div class="vl" style="left:1581px;top:847px;height:47px"></div>
<div class="vl" style="left:1721px;top:847px;height:47px"></div>
<div class="vl" style="left:1861px;top:847px;height:47px"></div>
<div class="vl" style="left:2001px;top:847px;height:47px"></div>
<div class="vl" style="left:2141px;top:847px;height:47px"></div>
<div class="vl" style="left:2228px;top:847px;height:47px"></div>
<div class="vl" style="left:490px;top:897px;height:47px"></div>
<div class="vl" style="left:535px;top:897px;height:47px"></div>
<div class="vl" style="left:881px;top:897px;height:47px"></div>
<div class="vl" style="left:1021px;top:897px;height:47px"></div>
<div class="vl" style="left:1161px;top:897px;height:47px"></div>
<div class="vl" style="left:1301px;top:897px;height:47px"></div>
<div class="vl" style="left:1441px;top:897px;height:47px"></div>
<div class="vl" style="left:1581px;top:897px;height:47px"></div>
<div class="vl" style="left:1721px;top:897px;height:47px"></div>
<div class="vl" style="left:1861px;top:897px;height:47px"></div>
<div class="vl" style="left:2001px;top:897px;height:47px"></div>
<div class="vl" style="left:2141px;top:897px;height:47px"></div>
<div class="vl" style="left:2228px;top:897px;height:47px"></div>
<div class="vl" style="left:490px;top:947px;height:47px"></div>
<div class="vl" style="left:535px;top:947px;height:47px"></div>
<div class="vl" style="left:881px;top:947px;height:47px"></div>
<div class="vl" style="left:1021px;top:947px;height:47px"></div>
<div class="vl" style="left:1161px;top:947px;height:47px"></div>
<div class="vl" style="left:1301px;top:947px;height:47px"></div>
<div class="vl" style="left:1441px;top:947px;height:47px"></div>
<div class="vl" style="left:1581px;top:947px;height:47px"></div>
<div class="vl" style="left:1721px;top:947px;height:47px"></div>
<div class="vl" style="left:1861px;top:947px;height:47px"></div>
<div class="vl" style="left:2001px;top:947px;height:47px"></div>
<div class="vl" style="left:2141px;top:947px;height:47px"></div>
<div class="vl" style="left:2228px;top:947px;height:47px"></div>
<div class="a" style="left:490px;top:273px;width:1px;height:12px;background:#c3c9d6"></div>
<div class="a" style="left:535px;top:262px;width:1px;height:34px;background:#c9ccd4"></div>
<div class="a" style="left:881px;top:273px;width:1px;height:12px;background:#c3c9d6"></div>
<div class="a" style="left:1021px;top:273px;width:1px;height:12px;background:#c3c9d6"></div>
<div class="a" style="left:1161px;top:273px;width:1px;height:12px;background:#c3c9d6"></div>
<div class="a" style="left:1301px;top:273px;width:1px;height:12px;background:#c3c9d6"></div>
<div class="a" style="left:1441px;top:273px;width:1px;height:12px;background:#c3c9d6"></div>
<div class="a" style="left:1581px;top:273px;width:1px;height:12px;background:#c3c9d6"></div>
<div class="a" style="left:1721px;top:273px;width:1px;height:12px;background:#c3c9d6"></div>
<div class="a" style="left:1861px;top:273px;width:1px;height:12px;background:#c3c9d6"></div>
<div class="a" style="left:2001px;top:273px;width:1px;height:12px;background:#c3c9d6"></div>
<div class="a" style="left:2141px;top:273px;width:1px;height:12px;background:#c3c9d6"></div>
<div class="a" style="left:2228px;top:262px;width:1px;height:34px;background:#c9ccd4"></div>
<div class="a" style="left:2229px;top:273px;width:1px;height:12px;background:#c3c9d6"></div>
<div class="hl" style="left:1023px;top:485px;width:138px"></div>
<div class="hl" style="left:1163px;top:485px;width:138px"></div>
<div class="hl" style="left:1303px;top:485px;width:138px"></div>
<div class="hl" style="left:1443px;top:485px;width:138px"></div>
<div class="hl" style="left:1583px;top:485px;width:138px"></div>
<div class="hl" style="left:1723px;top:485px;width:138px"></div>
<div class="hl" style="left:1863px;top:485px;width:138px"></div>
<div class="hl" style="left:2003px;top:485px;width:138px"></div>
<div class="hl" style="left:2143px;top:485px;width:85px"></div>
<div class="hl" style="left:1023px;top:565px;width:138px"></div>
<div class="hl" style="left:1163px;top:565px;width:138px"></div>
<div class="hl" style="left:1303px;top:565px;width:138px"></div>
<div class="hl" style="left:1443px;top:565px;width:138px"></div>
<div class="hl" style="left:1583px;top:565px;width:138px"></div>
<div class="hl" style="left:1723px;top:565px;width:138px"></div>
<div class="hl" style="left:1863px;top:565px;width:138px"></div>
<div class="hl" style="left:2003px;top:565px;width:138px"></div>
<div class="hl" style="left:2143px;top:565px;width:85px"></div>
<div class="hl" style="left:1023px;top:605px;width:138px"></div>
<div class="hl" style="left:1163px;top:605px;width:138px"></div>
<div class="hl" style="left:1303px;top:605px;width:138px"></div>
<div class="hl" style="left:1443px;top:605px;width:138px"></div>
<div class="hl" style="left:1583px;top:605px;width:138px"></div>
<div class="hl" style="left:1723px;top:605px;width:138px"></div>
<div class="hl" style="left:1863px;top:605px;width:138px"></div>
<div class="hl" style="left:2003px;top:605px;width:138px"></div>
<div class="hl" style="left:2143px;top:605px;width:85px"></div>
<div class="th" style="left:499px">序号</div>
<div class="th" style="left:544px">菜品名称</div>
<div class="th" style="left:890px">菜品类型</div>
<div class="th" style="left:1030px">规格</div>
<div class="th" style="left:1170px">门店基础售价</div>
<svg style="left:1258px;top:272px" width="14" height="14" viewBox="0 0 14 14" fill="none" stroke="#555" stroke-width="1.100"><circle cx="7" cy="7" r="6.400"/><path d="M5.200 5.600a1.800 1.800 0 1 1 2.600 1.600c-.5.300-.8.600-.8 1.200" stroke-linecap="round"/><circle cx="7" cy="10.200" r=".5" fill="#666" stroke="none"/></svg>
<div class="th" style="left:1310px">堂食售价</div>
<svg style="left:1370px;top:272px" width="14" height="14" viewBox="0 0 14 14" fill="none" stroke="#555" stroke-width="1.100"><circle cx="7" cy="7" r="6.400"/><path d="M5.200 5.600a1.800 1.800 0 1 1 2.600 1.600c-.5.300-.8.600-.8 1.200" stroke-linecap="round"/><circle cx="7" cy="10.200" r=".5" fill="#666" stroke="none"/></svg>
<div class="th" style="left:1450px">自提售价</div>
<svg style="left:1510px;top:272px" width="14" height="14" viewBox="0 0 14 14" fill="none" stroke="#555" stroke-width="1.100"><circle cx="7" cy="7" r="6.400"/><path d="M5.200 5.600a1.800 1.800 0 1 1 2.600 1.600c-.5.300-.8.600-.8 1.200" stroke-linecap="round"/><circle cx="7" cy="10.200" r=".5" fill="#666" stroke="none"/></svg>
<div class="th" style="left:1590px">自营外卖售价</div>
<svg style="left:1678px;top:272px" width="14" height="14" viewBox="0 0 14 14" fill="none" stroke="#555" stroke-width="1.100"><circle cx="7" cy="7" r="6.400"/><path d="M5.200 5.600a1.800 1.800 0 1 1 2.600 1.600c-.5.300-.8.600-.8 1.200" stroke-linecap="round"/><circle cx="7" cy="10.200" r=".5" fill="#666" stroke="none"/></svg>
<div class="th" style="left:1730px">会员价</div>
<svg style="left:1776px;top:272px" width="14" height="14" viewBox="0 0 14 14" fill="none" stroke="#555" stroke-width="1.100"><circle cx="7" cy="7" r="6.400"/><path d="M5.200 5.600a1.800 1.800 0 1 1 2.600 1.600c-.5.300-.8.600-.8 1.200" stroke-linecap="round"/><circle cx="7" cy="10.200" r=".5" fill="#666" stroke="none"/></svg>
<div class="th" style="left:1870px">SKU（货号）</div>
<div class="th" style="left:2010px">菜品条码</div>
<div class="th" style="left:2150px">菜品标识</div>
<div class="th" style="left:2237px">操作</div>
<div class="cb" style="left:467px;top:271px"></div>
<div class="cb" style="left:467px;top:313px"></div>
<div class="t" style="left:491px;width:45px;text-align:center;top:311px">1</div>
<div class="plus" style="left:544px;top:298px"></div>
<svg style="left:560.500px;top:315px" width="12" height="12" viewBox="0 0 12 12" fill="none" stroke="#333" stroke-width="1.200"><path d="M6 0v12M0 6h12"/></svg>
<div class="t lnk" style="left:593px;top:311px">新建审核商品2</div>
<div class="t" style="left:890px;top:311px">普通菜</div>
<div class="t" style="left:1030px;top:311px">标准</div>
<div class="t" style="left:1170px;top:311px">1.00</div>
<svg style="left:1205.7px;top:314.4px" width="12.500" height="13" viewBox="0 0 12.500 13" fill="none" stroke="#2b2b2b" stroke-width="1.150"><path d="M2.100 9.700L2.500 7.500 8.500 1.500a1 1 0 0 1 1.400 0l1.100 1.100a1 1 0 0 1 0 1.400L5 10 2.800 10.400a.6 .6 0 0 1-.7-.7z" stroke-linejoin="round"/><path d="M.2 12.300h12.200"/></svg>
<div class="t" style="left:1310px;top:311px">0.00</div>
<svg style="left:1345.7px;top:314.4px" width="12.500" height="13" viewBox="0 0 12.500 13" fill="none" stroke="#2b2b2b" stroke-width="1.150"><path d="M2.100 9.700L2.500 7.500 8.500 1.500a1 1 0 0 1 1.400 0l1.100 1.100a1 1 0 0 1 0 1.400L5 10 2.800 10.400a.6 .6 0 0 1-.7-.7z" stroke-linejoin="round"/><path d="M.2 12.300h12.200"/></svg>
<div class="t" style="left:1450px;top:311px">0.00</div>
<svg style="left:1485.7px;top:314.4px" width="12.500" height="13" viewBox="0 0 12.500 13" fill="none" stroke="#2b2b2b" stroke-width="1.150"><path d="M2.100 9.700L2.500 7.500 8.500 1.500a1 1 0 0 1 1.400 0l1.100 1.100a1 1 0 0 1 0 1.400L5 10 2.800 10.400a.6 .6 0 0 1-.7-.7z" stroke-linejoin="round"/><path d="M.2 12.300h12.200"/></svg>
<div class="t" style="left:1590px;top:311px">0.00</div>
<svg style="left:1625.7px;top:314.4px" width="12.500" height="13" viewBox="0 0 12.500 13" fill="none" stroke="#2b2b2b" stroke-width="1.150"><path d="M2.100 9.700L2.500 7.500 8.500 1.500a1 1 0 0 1 1.400 0l1.100 1.100a1 1 0 0 1 0 1.400L5 10 2.800 10.400a.6 .6 0 0 1-.7-.7z" stroke-linejoin="round"/><path d="M.2 12.300h12.200"/></svg>
<div class="t" style="left:1730px;top:311px">-</div>
<svg style="left:1743.2px;top:314.4px" width="12.500" height="13" viewBox="0 0 12.500 13" fill="none" stroke="#2b2b2b" stroke-width="1.150"><path d="M2.100 9.700L2.500 7.500 8.500 1.500a1 1 0 0 1 1.400 0l1.100 1.100a1 1 0 0 1 0 1.400L5 10 2.800 10.400a.6 .6 0 0 1-.7-.7z" stroke-linejoin="round"/><path d="M.2 12.300h12.200"/></svg>
<div class="t" style="left:1870px;top:311px">6661443</div>
<div class="t" style="left:2010px;top:311px">112686</div>
<div class="t lnk" style="left:2237px;top:311px">编辑</div>
<div class="t lnk" style="left:2281px;top:311px">推广</div>
<div class="t lnk" style="left:2325px;top:311px">设置基础销量</div>
<div class="t lnk" style="left:2425px;top:311px">复制</div>
<div class="cb" style="left:467px;top:363px"></div>
<div class="t" style="left:491px;width:45px;text-align:center;top:361px">2</div>
<div class="plus" style="left:544px;top:348px"></div>
<svg style="left:560.500px;top:365px" width="12" height="12" viewBox="0 0 12 12" fill="none" stroke="#333" stroke-width="1.200"><path d="M6 0v12M0 6h12"/></svg>
<div class="t lnk" style="left:593px;top:361px">POS门店商品</div>
<div class="t" style="left:890px;top:361px">普通菜</div>
<div class="t" style="left:1030px;top:361px">标准</div>
<div class="t" style="left:1170px;top:361px">9.00</div>
<svg style="left:1205.7px;top:364.4px" width="12.500" height="13" viewBox="0 0 12.500 13" fill="none" stroke="#2b2b2b" stroke-width="1.150"><path d="M2.100 9.700L2.500 7.500 8.500 1.500a1 1 0 0 1 1.400 0l1.100 1.100a1 1 0 0 1 0 1.400L5 10 2.800 10.400a.6 .6 0 0 1-.7-.7z" stroke-linejoin="round"/><path d="M.2 12.300h12.200"/></svg>
<div class="t" style="left:1310px;top:361px">9.00</div>
<svg style="left:1345.7px;top:364.4px" width="12.500" height="13" viewBox="0 0 12.500 13" fill="none" stroke="#2b2b2b" stroke-width="1.150"><path d="M2.100 9.700L2.500 7.500 8.500 1.500a1 1 0 0 1 1.400 0l1.100 1.100a1 1 0 0 1 0 1.400L5 10 2.800 10.400a.6 .6 0 0 1-.7-.7z" stroke-linejoin="round"/><path d="M.2 12.300h12.200"/></svg>
<div class="t" style="left:1450px;top:361px">0.00</div>
<svg style="left:1485.7px;top:364.4px" width="12.500" height="13" viewBox="0 0 12.500 13" fill="none" stroke="#2b2b2b" stroke-width="1.150"><path d="M2.100 9.700L2.500 7.500 8.500 1.500a1 1 0 0 1 1.400 0l1.100 1.100a1 1 0 0 1 0 1.400L5 10 2.800 10.400a.6 .6 0 0 1-.7-.7z" stroke-linejoin="round"/><path d="M.2 12.300h12.200"/></svg>
<div class="t" style="left:1590px;top:361px">0.00</div>
<svg style="left:1625.7px;top:364.4px" width="12.500" height="13" viewBox="0 0 12.500 13" fill="none" stroke="#2b2b2b" stroke-width="1.150"><path d="M2.100 9.700L2.500 7.500 8.500 1.500a1 1 0 0 1 1.400 0l1.100 1.100a1 1 0 0 1 0 1.400L5 10 2.800 10.400a.6 .6 0 0 1-.7-.7z" stroke-linejoin="round"/><path d="M.2 12.300h12.200"/></svg>
<div class="t" style="left:1730px;top:361px">1.00<span style="margin:0 .7px">-</span>8.00</div>
<svg style="left:1799.0px;top:364.4px" width="12.500" height="13" viewBox="0 0 12.500 13" fill="none" stroke="#2b2b2b" stroke-width="1.150"><path d="M2.100 9.700L2.500 7.500 8.500 1.500a1 1 0 0 1 1.400 0l1.100 1.100a1 1 0 0 1 0 1.400L5 10 2.800 10.400a.6 .6 0 0 1-.7-.7z" stroke-linejoin="round"/><path d="M.2 12.300h12.200"/></svg>
<div class="t" style="left:1870px;top:361px">1854169</div>
<div class="t" style="left:2010px;top:361px">9856589526576</div>
<div class="t lnk" style="left:2237px;top:361px">编辑</div>
<div class="t lnk" style="left:2281px;top:361px">推广</div>
<div class="t lnk" style="left:2325px;top:361px">设置基础销量</div>
<div class="t lnk" style="left:2425px;top:361px">复制</div>
<div class="cb" style="left:467px;top:413px"></div>
<div class="t" style="left:491px;width:45px;text-align:center;top:411px">3</div>
<svg style="left:544px;top:398px" width="45" height="45" viewBox="0 0 45 45"><defs><clipPath id="tc"><rect width="45" height="45" rx="5"/></clipPath><filter id="tb" x="-10%" y="-10%" width="120%" height="120%"><feGaussianBlur stdDeviation="0.7"/></filter></defs><g clip-path="url(#tc)"><rect width="45" height="45" fill="#a893bf"/><g filter="url(#tb)"><rect x="0" y="0" width="45" height="5" fill="#5e4e2a"/><path d="M17 0H42V5Q36 9 30 6Q24 4 17 8Z" fill="#7d7440"/><rect x="7" y="1" width="10" height="4" fill="#c9bbe6"/><rect x="6" y="5" width="36" height="20" fill="#ab96c6"/><rect x="30" y="7" width="10" height="16" fill="#b8a5d6"/><rect x="40" y="3" width="5" height="24" fill="#d8c2dc"/><path d="M0 3Q6 2 8 8Q9 14 4 15Q0 15 0 14Z" fill="#24572a"/><path d="M0 17Q5 18 5 22Q4 25 0 24Z" fill="#3f7a2e"/><path d="M0 25Q3 26 2 30L0 31Z" fill="#4f8a34"/><rect x="0" y="22" width="14" height="10" fill="#a8848a"/><rect x="4" y="24" width="6" height="6" fill="#8a6a9a"/><rect x="30" y="24" width="12" height="9" fill="#b59aa8"/><rect x="0" y="32" width="45" height="7" fill="#4f7a2c"/><rect x="0" y="38" width="45" height="7" fill="#dcb476"/><rect x="0" y="42" width="40" height="3" fill="#e8c690"/><path d="M39 28Q45 26 45 30V45H40Q37 38 39 28Z" fill="#5a8f2c"/><rect x="43" y="22" width="2" height="20" fill="#7a6a30"/><path d="M21 5L23.500 9H28.500L30 6L31 11Q31 15 27 15.500Q22 15.500 22 11Z" fill="#e8832c"/><path d="M24 14.500H30L31 18V33H24L23 24Z" fill="#cfc77a"/><path d="M23.500 22H33V25.500H23.500Z" fill="#d9702a"/><rect x="28.300" y="17" width="1.400" height="12" fill="#6a5aa8"/><path d="M24 33H31L31.500 41H28.500L27.500 36L26.500 41H23.500Z" fill="#a89088"/><rect x="28" y="40.300" width="7" height="1.600" rx=".8" fill="#a8452a"/><rect x="21" y="40.800" width="5" height="1.400" rx=".7" fill="#8a4a3a"/><path d="M20 36Q23 33 23.500 38L22 41Q19 40 20 36Z" fill="#c8531f"/><path d="M9 17Q11 15 14.500 21L15.500 16.500Q17 15 17.500 21L18 24Q18 27 15.500 27Q13 27 13 24Z" fill="#cfc3c6"/><path d="M14 26H18.500L19.500 31L19 39H17L16.800 34L16.200 39H14.200L14 31Z" fill="#6e7f99"/><rect x="14.300" y="26.500" width="4" height="4.500" fill="#3f454f"/><rect x="12.500" y="39.300" width="8" height="1.500" rx=".7" fill="#4a4a52"/></g></g></svg>
<div class="t lnk" style="left:593px;top:411px">新POS菜品</div>
<div class="t" style="left:890px;top:411px">普通菜</div>
<div class="t" style="left:1030px;top:411px">标准</div>
<div class="t" style="left:1170px;top:411px">10.00</div>
<svg style="left:1213.5px;top:414.4px" width="12.500" height="13" viewBox="0 0 12.500 13" fill="none" stroke="#2b2b2b" stroke-width="1.150"><path d="M2.100 9.700L2.500 7.500 8.500 1.500a1 1 0 0 1 1.400 0l1.100 1.100a1 1 0 0 1 0 1.400L5 10 2.800 10.400a.6 .6 0 0 1-.7-.7z" stroke-linejoin="round"/><path d="M.2 12.300h12.200"/></svg>
<div class="t" style="left:1310px;top:411px">0.00</div>
<svg style="left:1345.7px;top:414.4px" width="12.500" height="13" viewBox="0 0 12.500 13" fill="none" stroke="#2b2b2b" stroke-width="1.150"><path d="M2.100 9.700L2.500 7.500 8.500 1.500a1 1 0 0 1 1.400 0l1.100 1.100a1 1 0 0 1 0 1.400L5 10 2.800 10.400a.6 .6 0 0 1-.7-.7z" stroke-linejoin="round"/><path d="M.2 12.300h12.200"/></svg>
<div class="t" style="left:1450px;top:411px">0.00</div>
<svg style="left:1485.7px;top:414.4px" width="12.500" height="13" viewBox="0 0 12.500 13" fill="none" stroke="#2b2b2b" stroke-width="1.150"><path d="M2.100 9.700L2.500 7.500 8.500 1.500a1 1 0 0 1 1.400 0l1.100 1.100a1 1 0 0 1 0 1.400L5 10 2.800 10.400a.6 .6 0 0 1-.7-.7z" stroke-linejoin="round"/><path d="M.2 12.300h12.200"/></svg>
<div class="t" style="left:1590px;top:411px">0.00</div>
<svg style="left:1625.7px;top:414.4px" width="12.500" height="13" viewBox="0 0 12.500 13" fill="none" stroke="#2b2b2b" stroke-width="1.150"><path d="M2.100 9.700L2.500 7.500 8.500 1.500a1 1 0 0 1 1.400 0l1.100 1.100a1 1 0 0 1 0 1.400L5 10 2.800 10.400a.6 .6 0 0 1-.7-.7z" stroke-linejoin="round"/><path d="M.2 12.300h12.200"/></svg>
<div class="t" style="left:1730px;top:411px">-</div>
<svg style="left:1743.2px;top:414.4px" width="12.500" height="13" viewBox="0 0 12.500 13" fill="none" stroke="#2b2b2b" stroke-width="1.150"><path d="M2.100 9.700L2.500 7.500 8.500 1.500a1 1 0 0 1 1.400 0l1.100 1.100a1 1 0 0 1 0 1.400L5 10 2.800 10.400a.6 .6 0 0 1-.7-.7z" stroke-linejoin="round"/><path d="M.2 12.300h12.200"/></svg>
<div class="t" style="left:1870px;top:411px">1854168</div>
<div class="t" style="left:2010px;top:411px">9856589526575</div>
<div class="t lnk" style="left:2237px;top:411px">编辑</div>
<div class="t lnk" style="left:2281px;top:411px">推广</div>
<div class="t lnk" style="left:2325px;top:411px">设置基础销量</div>
<div class="t lnk" style="left:2425px;top:411px">复制</div>
<div class="cb" style="left:467px;top:478px"></div>
<div class="t" style="left:491px;width:45px;text-align:center;top:456px">4</div>
<div class="plus" style="left:544px;top:451px"></div>
<svg style="left:560.500px;top:468px" width="12" height="12" viewBox="0 0 12 12" fill="none" stroke="#333" stroke-width="1.200"><path d="M6 0v12M0 6h12"/></svg>
<div class="t lnk" style="left:593px;top:456px">扫码买单菜品1</div>
<div class="t" style="left:890px;top:456px">普通菜</div>
<div class="t" style="left:1030px;top:456px">标准</div>
<div class="t" style="left:1170px;top:456px">23.00</div>
<svg style="left:1213.5px;top:459.4px" width="12.500" height="13" viewBox="0 0 12.500 13" fill="none" stroke="#2b2b2b" stroke-width="1.150"><path d="M2.100 9.700L2.500 7.500 8.500 1.500a1 1 0 0 1 1.400 0l1.100 1.100a1 1 0 0 1 0 1.400L5 10 2.800 10.400a.6 .6 0 0 1-.7-.7z" stroke-linejoin="round"/><path d="M.2 12.300h12.200"/></svg>
<div class="t" style="left:1310px;top:456px">0.00</div>
<svg style="left:1345.7px;top:459.4px" width="12.500" height="13" viewBox="0 0 12.500 13" fill="none" stroke="#2b2b2b" stroke-width="1.150"><path d="M2.100 9.700L2.500 7.500 8.500 1.500a1 1 0 0 1 1.400 0l1.100 1.100a1 1 0 0 1 0 1.400L5 10 2.800 10.400a.6 .6 0 0 1-.7-.7z" stroke-linejoin="round"/><path d="M.2 12.300h12.200"/></svg>
<div class="t" style="left:1450px;top:456px">0.00</div>
<svg style="left:1485.7px;top:459.4px" width="12.500" height="13" viewBox="0 0 12.500 13" fill="none" stroke="#2b2b2b" stroke-width="1.150"><path d="M2.100 9.700L2.500 7.500 8.500 1.500a1 1 0 0 1 1.400 0l1.100 1.100a1 1 0 0 1 0 1.400L5 10 2.800 10.400a.6 .6 0 0 1-.7-.7z" stroke-linejoin="round"/><path d="M.2 12.300h12.200"/></svg>
<div class="t" style="left:1590px;top:456px">0.00</div>
<svg style="left:1625.7px;top:459.4px" width="12.500" height="13" viewBox="0 0 12.500 13" fill="none" stroke="#2b2b2b" stroke-width="1.150"><path d="M2.100 9.700L2.500 7.500 8.500 1.500a1 1 0 0 1 1.400 0l1.100 1.100a1 1 0 0 1 0 1.400L5 10 2.800 10.400a.6 .6 0 0 1-.7-.7z" stroke-linejoin="round"/><path d="M.2 12.300h12.200"/></svg>
<div class="t" style="left:1730px;top:456px">-</div>
<svg style="left:1743.2px;top:459.4px" width="12.500" height="13" viewBox="0 0 12.500 13" fill="none" stroke="#2b2b2b" stroke-width="1.150"><path d="M2.100 9.700L2.500 7.500 8.500 1.500a1 1 0 0 1 1.400 0l1.100 1.100a1 1 0 0 1 0 1.400L5 10 2.800 10.400a.6 .6 0 0 1-.7-.7z" stroke-linejoin="round"/><path d="M.2 12.300h12.200"/></svg>
<div class="t" style="left:1870px;top:456px">1854166</div>
<div class="t" style="left:2010px;top:456px">9856589526573</div>
<div class="t" style="left:1030px;top:496px">大份2</div>
<div class="t" style="left:1170px;top:496px">33.00</div>
<svg style="left:1213.5px;top:499.4px" width="12.500" height="13" viewBox="0 0 12.500 13" fill="none" stroke="#2b2b2b" stroke-width="1.150"><path d="M2.100 9.700L2.500 7.500 8.500 1.500a1 1 0 0 1 1.400 0l1.100 1.100a1 1 0 0 1 0 1.400L5 10 2.800 10.400a.6 .6 0 0 1-.7-.7z" stroke-linejoin="round"/><path d="M.2 12.300h12.200"/></svg>
<div class="t" style="left:1310px;top:496px">0.00</div>
<svg style="left:1345.7px;top:499.4px" width="12.500" height="13" viewBox="0 0 12.500 13" fill="none" stroke="#2b2b2b" stroke-width="1.150"><path d="M2.100 9.700L2.500 7.500 8.500 1.500a1 1 0 0 1 1.400 0l1.100 1.100a1 1 0 0 1 0 1.400L5 10 2.800 10.400a.6 .6 0 0 1-.7-.7z" stroke-linejoin="round"/><path d="M.2 12.300h12.200"/></svg>
<div class="t" style="left:1450px;top:496px">0.00</div>
<svg style="left:1485.7px;top:499.4px" width="12.500" height="13" viewBox="0 0 12.500 13" fill="none" stroke="#2b2b2b" stroke-width="1.150"><path d="M2.100 9.700L2.500 7.500 8.500 1.500a1 1 0 0 1 1.400 0l1.100 1.100a1 1 0 0 1 0 1.400L5 10 2.800 10.400a.6 .6 0 0 1-.7-.7z" stroke-linejoin="round"/><path d="M.2 12.300h12.200"/></svg>
<div class="t" style="left:1590px;top:496px">0.00</div>
<svg style="left:1625.7px;top:499.4px" width="12.500" height="13" viewBox="0 0 12.500 13" fill="none" stroke="#2b2b2b" stroke-width="1.150"><path d="M2.100 9.700L2.500 7.500 8.500 1.500a1 1 0 0 1 1.400 0l1.100 1.100a1 1 0 0 1 0 1.400L5 10 2.800 10.400a.6 .6 0 0 1-.7-.7z" stroke-linejoin="round"/><path d="M.2 12.300h12.200"/></svg>
<div class="t" style="left:1730px;top:496px">-</div>
<svg style="left:1743.2px;top:499.4px" width="12.500" height="13" viewBox="0 0 12.500 13" fill="none" stroke="#2b2b2b" stroke-width="1.150"><path d="M2.100 9.700L2.500 7.500 8.500 1.500a1 1 0 0 1 1.400 0l1.100 1.100a1 1 0 0 1 0 1.400L5 10 2.800 10.400a.6 .6 0 0 1-.7-.7z" stroke-linejoin="round"/><path d="M.2 12.300h12.200"/></svg>
<div class="t" style="left:1870px;top:496px">1854167</div>
<div class="t" style="left:2010px;top:496px">9856589526574</div>
<div class="t lnk" style="left:2237px;top:476px">编辑</div>
<div class="t lnk" style="left:2281px;top:476px">推广</div>
<div class="t lnk" style="left:2325px;top:476px">设置基础销量</div>
<div class="t lnk" style="left:2425px;top:476px">复制</div>
<div class="cb" style="left:467px;top:578px"></div>
<div class="t" style="left:491px;width:45px;text-align:center;top:536px">5</div>
<div class="plus" style="left:544px;top:531px"></div>
<svg style="left:560.500px;top:548px" width="12" height="12" viewBox="0 0 12 12" fill="none" stroke="#333" stroke-width="1.200"><path d="M6 0v12M0 6h12"/></svg>
<div class="t lnk" style="left:593px;top:536px">1号规格蛋糕1234</div>
<div class="t" style="left:890px;top:536px">称重菜</div>
<div class="t" style="left:1030px;top:536px">标准</div>
<div class="t" style="left:1170px;top:536px">14.00</div>
<svg style="left:1213.5px;top:539.4px" width="12.500" height="13" viewBox="0 0 12.500 13" fill="none" stroke="#2b2b2b" stroke-width="1.150"><path d="M2.100 9.700L2.500 7.500 8.500 1.500a1 1 0 0 1 1.400 0l1.100 1.100a1 1 0 0 1 0 1.400L5 10 2.800 10.400a.6 .6 0 0 1-.7-.7z" stroke-linejoin="round"/><path d="M.2 12.300h12.200"/></svg>
<div class="t" style="left:1310px;top:536px">12.00</div>
<svg style="left:1353.5px;top:539.4px" width="12.500" height="13" viewBox="0 0 12.500 13" fill="none" stroke="#2b2b2b" stroke-width="1.150"><path d="M2.100 9.700L2.500 7.500 8.500 1.500a1 1 0 0 1 1.400 0l1.100 1.100a1 1 0 0 1 0 1.400L5 10 2.800 10.400a.6 .6 0 0 1-.7-.7z" stroke-linejoin="round"/><path d="M.2 12.300h12.200"/></svg>
<div class="t" style="left:1450px;top:536px">21.00</div>
<svg style="left:1493.5px;top:539.4px" width="12.500" height="13" viewBox="0 0 12.500 13" fill="none" stroke="#2b2b2b" stroke-width="1.150"><path d="M2.100 9.700L2.500 7.500 8.500 1.500a1 1 0 0 1 1.400 0l1.100 1.100a1 1 0 0 1 0 1.400L5 10 2.800 10.400a.6 .6 0 0 1-.7-.7z" stroke-linejoin="round"/><path d="M.2 12.300h12.200"/></svg>
<div class="t" style="left:1590px;top:536px">14.00</div>
<svg style="left:1633.5px;top:539.4px" width="12.500" height="13" viewBox="0 0 12.500 13" fill="none" stroke="#2b2b2b" stroke-width="1.150"><path d="M2.100 9.700L2.500 7.500 8.500 1.500a1 1 0 0 1 1.400 0l1.100 1.100a1 1 0 0 1 0 1.400L5 10 2.800 10.400a.6 .6 0 0 1-.7-.7z" stroke-linejoin="round"/><path d="M.2 12.300h12.200"/></svg>
<div class="t" style="left:1730px;top:536px">11.00<span style="margin:0 .7px">-</span>13.00</div>
<svg style="left:1814.6px;top:539.4px" width="12.500" height="13" viewBox="0 0 12.500 13" fill="none" stroke="#2b2b2b" stroke-width="1.150"><path d="M2.100 9.700L2.500 7.500 8.500 1.500a1 1 0 0 1 1.400 0l1.100 1.100a1 1 0 0 1 0 1.400L5 10 2.800 10.400a.6 .6 0 0 1-.7-.7z" stroke-linejoin="round"/><path d="M.2 12.300h12.200"/></svg>
<div class="t" style="left:1870px;top:536px">1854163</div>
<div class="t" style="left:1030px;top:576px">大份</div>
<div class="t" style="left:1170px;top:576px">13.00</div>
<svg style="left:1213.5px;top:579.4px" width="12.500" height="13" viewBox="0 0 12.500 13" fill="none" stroke="#2b2b2b" stroke-width="1.150"><path d="M2.100 9.700L2.500 7.500 8.500 1.500a1 1 0 0 1 1.400 0l1.100 1.100a1 1 0 0 1 0 1.400L5 10 2.800 10.400a.6 .6 0 0 1-.7-.7z" stroke-linejoin="round"/><path d="M.2 12.300h12.200"/></svg>
<div class="t" style="left:1310px;top:576px">12.00</div>
<svg style="left:1353.5px;top:579.4px" width="12.500" height="13" viewBox="0 0 12.500 13" fill="none" stroke="#2b2b2b" stroke-width="1.150"><path d="M2.100 9.700L2.500 7.500 8.500 1.500a1 1 0 0 1 1.400 0l1.100 1.100a1 1 0 0 1 0 1.400L5 10 2.800 10.400a.6 .6 0 0 1-.7-.7z" stroke-linejoin="round"/><path d="M.2 12.300h12.200"/></svg>
<div class="t" style="left:1450px;top:576px">21.00</div>
<svg style="left:1493.5px;top:579.4px" width="12.500" height="13" viewBox="0 0 12.500 13" fill="none" stroke="#2b2b2b" stroke-width="1.150"><path d="M2.100 9.700L2.500 7.500 8.500 1.500a1 1 0 0 1 1.400 0l1.100 1.100a1 1 0 0 1 0 1.400L5 10 2.800 10.400a.6 .6 0 0 1-.7-.7z" stroke-linejoin="round"/><path d="M.2 12.300h12.200"/></svg>
<div class="t" style="left:1590px;top:576px">13.00</div>
<svg style="left:1633.5px;top:579.4px" width="12.500" height="13" viewBox="0 0 12.500 13" fill="none" stroke="#2b2b2b" stroke-width="1.150"><path d="M2.100 9.700L2.500 7.500 8.500 1.500a1 1 0 0 1 1.400 0l1.100 1.100a1 1 0 0 1 0 1.400L5 10 2.800 10.400a.6 .6 0 0 1-.7-.7z" stroke-linejoin="round"/><path d="M.2 12.300h12.200"/></svg>
<div class="t" style="left:1730px;top:576px">11.00<span style="margin:0 .7px">-</span>12.50</div>
<svg style="left:1814.6px;top:579.4px" width="12.500" height="13" viewBox="0 0 12.500 13" fill="none" stroke="#2b2b2b" stroke-width="1.150"><path d="M2.100 9.700L2.500 7.500 8.500 1.500a1 1 0 0 1 1.400 0l1.100 1.100a1 1 0 0 1 0 1.400L5 10 2.800 10.400a.6 .6 0 0 1-.7-.7z" stroke-linejoin="round"/><path d="M.2 12.300h12.200"/></svg>
<div class="t" style="left:1870px;top:576px">1854164</div>
<div class="t" style="left:1030px;top:616px">中份</div>
<div class="t" style="left:1170px;top:616px">12.00</div>
<svg style="left:1213.5px;top:619.4px" width="12.500" height="13" viewBox="0 0 12.500 13" fill="none" stroke="#2b2b2b" stroke-width="1.150"><path d="M2.100 9.700L2.500 7.500 8.500 1.500a1 1 0 0 1 1.400 0l1.100 1.100a1 1 0 0 1 0 1.400L5 10 2.800 10.400a.6 .6 0 0 1-.7-.7z" stroke-linejoin="round"/><path d="M.2 12.300h12.200"/></svg>
<div class="t" style="left:1310px;top:616px">12.00</div>
<svg style="left:1353.5px;top:619.4px" width="12.500" height="13" viewBox="0 0 12.500 13" fill="none" stroke="#2b2b2b" stroke-width="1.150"><path d="M2.100 9.700L2.500 7.500 8.500 1.500a1 1 0 0 1 1.400 0l1.100 1.100a1 1 0 0 1 0 1.400L5 10 2.800 10.400a.6 .6 0 0 1-.7-.7z" stroke-linejoin="round"/><path d="M.2 12.300h12.200"/></svg>
<div class="t" style="left:1450px;top:616px">21.00</div>
<svg style="left:1493.5px;top:619.4px" width="12.500" height="13" viewBox="0 0 12.500 13" fill="none" stroke="#2b2b2b" stroke-width="1.150"><path d="M2.100 9.700L2.500 7.500 8.500 1.500a1 1 0 0 1 1.400 0l1.100 1.100a1 1 0 0 1 0 1.400L5 10 2.800 10.400a.6 .6 0 0 1-.7-.7z" stroke-linejoin="round"/><path d="M.2 12.300h12.200"/></svg>
<div class="t" style="left:1590px;top:616px">12.00</div>
<svg style="left:1633.5px;top:619.4px" width="12.500" height="13" viewBox="0 0 12.500 13" fill="none" stroke="#2b2b2b" stroke-width="1.150"><path d="M2.100 9.700L2.500 7.500 8.500 1.500a1 1 0 0 1 1.400 0l1.100 1.100a1 1 0 0 1 0 1.400L5 10 2.800 10.400a.6 .6 0 0 1-.7-.7z" stroke-linejoin="round"/><path d="M.2 12.300h12.200"/></svg>
<div class="t" style="left:1730px;top:616px">11.10<span style="margin:0 .7px">-</span>11.40</div>
<svg style="left:1814.6px;top:619.4px" width="12.500" height="13" viewBox="0 0 12.500 13" fill="none" stroke="#2b2b2b" stroke-width="1.150"><path d="M2.100 9.700L2.500 7.500 8.500 1.500a1 1 0 0 1 1.400 0l1.100 1.100a1 1 0 0 1 0 1.400L5 10 2.800 10.400a.6 .6 0 0 1-.7-.7z" stroke-linejoin="round"/><path d="M.2 12.300h12.200"/></svg>
<div class="t" style="left:1870px;top:616px">1854165</div>
<div class="t lnk" style="left:2237px;top:576px">编辑</div>
<div class="t lnk" style="left:2281px;top:576px">推广</div>
<div class="t lnk" style="left:2325px;top:576px">设置基础销量</div>
<div class="t lnk" style="left:2425px;top:576px">复制</div>
<div class="cb" style="left:467px;top:663px"></div>
<div class="t" style="left:491px;width:45px;text-align:center;top:661px">6</div>
<div class="plus" style="left:544px;top:648px"></div>
<svg style="left:560.500px;top:665px" width="12" height="12" viewBox="0 0 12 12" fill="none" stroke="#333" stroke-width="1.200"><path d="M6 0v12M0 6h12"/></svg>
<div class="t lnk" style="left:593px;top:661px">2号规格蛋糕1234</div>
<div class="t" style="left:890px;top:661px">普通菜</div>
<div class="t" style="left:1030px;top:661px">标准</div>
<div class="t" style="left:1170px;top:661px">50.00</div>
<svg style="left:1213.5px;top:664.4px" width="12.500" height="13" viewBox="0 0 12.500 13" fill="none" stroke="#2b2b2b" stroke-width="1.150"><path d="M2.100 9.700L2.500 7.500 8.500 1.500a1 1 0 0 1 1.400 0l1.100 1.100a1 1 0 0 1 0 1.400L5 10 2.800 10.400a.6 .6 0 0 1-.7-.7z" stroke-linejoin="round"/><path d="M.2 12.300h12.200"/></svg>
<div class="t" style="left:1310px;top:661px">12.00</div>
<svg style="left:1353.5px;top:664.4px" width="12.500" height="13" viewBox="0 0 12.500 13" fill="none" stroke="#2b2b2b" stroke-width="1.150"><path d="M2.100 9.700L2.500 7.500 8.500 1.500a1 1 0 0 1 1.400 0l1.100 1.100a1 1 0 0 1 0 1.400L5 10 2.800 10.400a.6 .6 0 0 1-.7-.7z" stroke-linejoin="round"/><path d="M.2 12.300h12.200"/></svg>
<div class="t" style="left:1450px;top:661px">21.00</div>
<svg style="left:1493.5px;top:664.4px" width="12.500" height="13" viewBox="0 0 12.500 13" fill="none" stroke="#2b2b2b" stroke-width="1.150"><path d="M2.100 9.700L2.500 7.500 8.500 1.500a1 1 0 0 1 1.400 0l1.100 1.100a1 1 0 0 1 0 1.400L5 10 2.800 10.400a.6 .6 0 0 1-.7-.7z" stroke-linejoin="round"/><path d="M.2 12.300h12.200"/></svg>
<div class="t" style="left:1590px;top:661px">50.00</div>
<svg style="left:1633.5px;top:664.4px" width="12.500" height="13" viewBox="0 0 12.500 13" fill="none" stroke="#2b2b2b" stroke-width="1.150"><path d="M2.100 9.700L2.500 7.500 8.500 1.500a1 1 0 0 1 1.400 0l1.100 1.100a1 1 0 0 1 0 1.400L5 10 2.800 10.400a.6 .6 0 0 1-.7-.7z" stroke-linejoin="round"/><path d="M.2 12.300h12.200"/></svg>
<div class="t" style="left:1730px;top:661px">13.00<span style="margin:0 .7px">-</span>19.00</div>
<svg style="left:1814.6px;top:664.4px" width="12.500" height="13" viewBox="0 0 12.500 13" fill="none" stroke="#2b2b2b" stroke-width="1.150"><path d="M2.100 9.700L2.500 7.500 8.500 1.500a1 1 0 0 1 1.400 0l1.100 1.100a1 1 0 0 1 0 1.400L5 10 2.800 10.400a.6 .6 0 0 1-.7-.7z" stroke-linejoin="round"/><path d="M.2 12.300h12.200"/></svg>
<div class="t" style="left:1870px;top:661px">1854162</div>
<div class="t lnk" style="left:2237px;top:661px">编辑</div>
<div class="t lnk" style="left:2281px;top:661px">推广</div>
<div class="t lnk" style="left:2325px;top:661px">设置基础销量</div>
<div class="t lnk" style="left:2425px;top:661px">复制</div>
<div class="cb" style="left:467px;top:713px"></div>
<div class="t" style="left:491px;width:45px;text-align:center;top:711px">7</div>
<div class="plus" style="left:544px;top:698px"></div>
<svg style="left:560.500px;top:715px" width="12" height="12" viewBox="0 0 12 12" fill="none" stroke="#333" stroke-width="1.200"><path d="M6 0v12M0 6h12"/></svg>
<div class="t lnk" style="left:593px;top:711px">copy套餐</div>
<div class="t" style="left:890px;top:711px">套餐</div>
<div class="t" style="left:1030px;top:711px">-</div>
<div class="t" style="left:1170px;top:711px">25.00</div>
<svg style="left:1213.5px;top:714.4px" width="12.500" height="13" viewBox="0 0 12.500 13" fill="none" stroke="#2b2b2b" stroke-width="1.150"><path d="M2.100 9.700L2.500 7.500 8.500 1.500a1 1 0 0 1 1.400 0l1.100 1.100a1 1 0 0 1 0 1.400L5 10 2.800 10.400a.6 .6 0 0 1-.7-.7z" stroke-linejoin="round"/><path d="M.2 12.300h12.200"/></svg>
<div class="t" style="left:1310px;top:711px">0.00</div>
<svg style="left:1345.7px;top:714.4px" width="12.500" height="13" viewBox="0 0 12.500 13" fill="none" stroke="#2b2b2b" stroke-width="1.150"><path d="M2.100 9.700L2.500 7.500 8.500 1.500a1 1 0 0 1 1.400 0l1.100 1.100a1 1 0 0 1 0 1.400L5 10 2.800 10.400a.6 .6 0 0 1-.7-.7z" stroke-linejoin="round"/><path d="M.2 12.300h12.200"/></svg>
<div class="t" style="left:1450px;top:711px">0.00</div>
<svg style="left:1485.7px;top:714.4px" width="12.500" height="13" viewBox="0 0 12.500 13" fill="none" stroke="#2b2b2b" stroke-width="1.150"><path d="M2.100 9.700L2.500 7.500 8.500 1.500a1 1 0 0 1 1.400 0l1.100 1.100a1 1 0 0 1 0 1.400L5 10 2.800 10.400a.6 .6 0 0 1-.7-.7z" stroke-linejoin="round"/><path d="M.2 12.300h12.200"/></svg>
<div class="t" style="left:1590px;top:711px">0.00</div>
<svg style="left:1625.7px;top:714.4px" width="12.500" height="13" viewBox="0 0 12.500 13" fill="none" stroke="#2b2b2b" stroke-width="1.150"><path d="M2.100 9.700L2.500 7.500 8.500 1.500a1 1 0 0 1 1.400 0l1.100 1.100a1 1 0 0 1 0 1.400L5 10 2.800 10.400a.6 .6 0 0 1-.7-.7z" stroke-linejoin="round"/><path d="M.2 12.300h12.200"/></svg>
<div class="t" style="left:1730px;top:711px">-</div>
<svg style="left:1743.2px;top:714.4px" width="12.500" height="13" viewBox="0 0 12.500 13" fill="none" stroke="#2b2b2b" stroke-width="1.150"><path d="M2.100 9.700L2.500 7.500 8.500 1.500a1 1 0 0 1 1.400 0l1.100 1.100a1 1 0 0 1 0 1.400L5 10 2.800 10.400a.6 .6 0 0 1-.7-.7z" stroke-linejoin="round"/><path d="M.2 12.300h12.200"/></svg>
<div class="t lnk" style="left:2237px;top:711px">编辑</div>
<div class="t lnk" style="left:2281px;top:711px">推广</div>
<div class="t lnk" style="left:2325px;top:711px">设置基础销量</div>
<div class="t lnk" style="left:2425px;top:711px">复制</div>
<div class="cb" style="left:467px;top:763px"></div>
<div class="t" style="left:491px;width:45px;text-align:center;top:761px">8</div>
<div class="plus" style="left:544px;top:748px"></div>
<svg style="left:560.500px;top:765px" width="12" height="12" viewBox="0 0 12 12" fill="none" stroke="#333" stroke-width="1.200"><path d="M6 0v12M0 6h12"/></svg>
<div class="t lnk" style="left:593px;top:761px">预约商品2-自提和外卖</div>
<div class="t" style="left:890px;top:761px">普通菜</div>
<div class="t" style="left:1030px;top:761px">标准</div>
<div class="t" style="left:1170px;top:761px">20.00</div>
<svg style="left:1213.5px;top:764.4px" width="12.500" height="13" viewBox="0 0 12.500 13" fill="none" stroke="#2b2b2b" stroke-width="1.150"><path d="M2.100 9.700L2.500 7.500 8.500 1.500a1 1 0 0 1 1.400 0l1.100 1.100a1 1 0 0 1 0 1.400L5 10 2.800 10.400a.6 .6 0 0 1-.7-.7z" stroke-linejoin="round"/><path d="M.2 12.300h12.200"/></svg>
<div class="t" style="left:1310px;top:761px">10.00</div>
<svg style="left:1353.5px;top:764.4px" width="12.500" height="13" viewBox="0 0 12.500 13" fill="none" stroke="#2b2b2b" stroke-width="1.150"><path d="M2.100 9.700L2.500 7.500 8.500 1.500a1 1 0 0 1 1.400 0l1.100 1.100a1 1 0 0 1 0 1.400L5 10 2.800 10.400a.6 .6 0 0 1-.7-.7z" stroke-linejoin="round"/><path d="M.2 12.300h12.200"/></svg>
<div class="t" style="left:1450px;top:761px">15.00</div>
<svg style="left:1493.5px;top:764.4px" width="12.500" height="13" viewBox="0 0 12.500 13" fill="none" stroke="#2b2b2b" stroke-width="1.150"><path d="M2.100 9.700L2.500 7.500 8.500 1.500a1 1 0 0 1 1.400 0l1.100 1.100a1 1 0 0 1 0 1.400L5 10 2.800 10.400a.6 .6 0 0 1-.7-.7z" stroke-linejoin="round"/><path d="M.2 12.300h12.200"/></svg>
<div class="t" style="left:1590px;top:761px">0.00</div>
<svg style="left:1625.7px;top:764.4px" width="12.500" height="13" viewBox="0 0 12.500 13" fill="none" stroke="#2b2b2b" stroke-width="1.150"><path d="M2.100 9.700L2.500 7.500 8.500 1.500a1 1 0 0 1 1.400 0l1.100 1.100a1 1 0 0 1 0 1.400L5 10 2.800 10.400a.6 .6 0 0 1-.7-.7z" stroke-linejoin="round"/><path d="M.2 12.300h12.200"/></svg>
<div class="t" style="left:1730px;top:761px">-</div>
<svg style="left:1743.2px;top:764.4px" width="12.500" height="13" viewBox="0 0 12.500 13" fill="none" stroke="#2b2b2b" stroke-width="1.150"><path d="M2.100 9.700L2.500 7.500 8.500 1.500a1 1 0 0 1 1.400 0l1.100 1.100a1 1 0 0 1 0 1.400L5 10 2.800 10.400a.6 .6 0 0 1-.7-.7z" stroke-linejoin="round"/><path d="M.2 12.300h12.200"/></svg>
<div class="t lnk" style="left:2237px;top:761px">编辑</div>
<div class="t lnk" style="left:2281px;top:761px">推广</div>
<div class="t lnk" style="left:2325px;top:761px">设置基础销量</div>
<div class="t lnk" style="left:2425px;top:761px">复制</div>
<div class="cb" style="left:467px;top:813px"></div>
<div class="t" style="left:491px;width:45px;text-align:center;top:811px">9</div>
<div class="plus" style="left:544px;top:798px"></div>
<svg style="left:560.500px;top:815px" width="12" height="12" viewBox="0 0 12 12" fill="none" stroke="#333" stroke-width="1.200"><path d="M6 0v12M0 6h12"/></svg>
<div class="t lnk" style="left:593px;top:811px">预约商品1-仅外卖</div>
<div class="t" style="left:890px;top:811px">普通菜</div>
<div class="t" style="left:1030px;top:811px">标准</div>
<div class="t" style="left:1170px;top:811px">20.00</div>
<svg style="left:1213.5px;top:814.4px" width="12.500" height="13" viewBox="0 0 12.500 13" fill="none" stroke="#2b2b2b" stroke-width="1.150"><path d="M2.100 9.700L2.500 7.500 8.500 1.500a1 1 0 0 1 1.400 0l1.100 1.100a1 1 0 0 1 0 1.400L5 10 2.800 10.400a.6 .6 0 0 1-.7-.7z" stroke-linejoin="round"/><path d="M.2 12.300h12.200"/></svg>
<div class="t" style="left:1310px;top:811px">0.00</div>
<svg style="left:1345.7px;top:814.4px" width="12.500" height="13" viewBox="0 0 12.500 13" fill="none" stroke="#2b2b2b" stroke-width="1.150"><path d="M2.100 9.700L2.500 7.500 8.500 1.500a1 1 0 0 1 1.400 0l1.100 1.100a1 1 0 0 1 0 1.400L5 10 2.800 10.400a.6 .6 0 0 1-.7-.7z" stroke-linejoin="round"/><path d="M.2 12.300h12.200"/></svg>
<div class="t" style="left:1450px;top:811px">0.00</div>
<svg style="left:1485.7px;top:814.4px" width="12.500" height="13" viewBox="0 0 12.500 13" fill="none" stroke="#2b2b2b" stroke-width="1.150"><path d="M2.100 9.700L2.500 7.500 8.500 1.500a1 1 0 0 1 1.400 0l1.100 1.100a1 1 0 0 1 0 1.400L5 10 2.800 10.400a.6 .6 0 0 1-.7-.7z" stroke-linejoin="round"/><path d="M.2 12.300h12.200"/></svg>
<div class="t" style="left:1590px;top:811px">18.00</div>
<svg style="left:1633.5px;top:814.4px" width="12.500" height="13" viewBox="0 0 12.500 13" fill="none" stroke="#2b2b2b" stroke-width="1.150"><path d="M2.100 9.700L2.500 7.500 8.500 1.500a1 1 0 0 1 1.400 0l1.100 1.100a1 1 0 0 1 0 1.400L5 10 2.800 10.400a.6 .6 0 0 1-.7-.7z" stroke-linejoin="round"/><path d="M.2 12.300h12.200"/></svg>
<div class="t" style="left:1730px;top:811px">-</div>
<svg style="left:1743.2px;top:814.4px" width="12.500" height="13" viewBox="0 0 12.500 13" fill="none" stroke="#2b2b2b" stroke-width="1.150"><path d="M2.100 9.700L2.500 7.500 8.500 1.500a1 1 0 0 1 1.400 0l1.100 1.100a1 1 0 0 1 0 1.400L5 10 2.800 10.400a.6 .6 0 0 1-.7-.7z" stroke-linejoin="round"/><path d="M.2 12.300h12.200"/></svg>
<div class="t" style="left:1870px;top:811px">6661427</div>
<div class="t" style="left:2010px;top:811px">112670</div>
<div class="t lnk" style="left:2237px;top:811px">编辑</div>
<div class="t lnk" style="left:2281px;top:811px">推广</div>
<div class="t lnk" style="left:2325px;top:811px">设置基础销量</div>
<div class="t lnk" style="left:2425px;top:811px">复制</div>
<div class="cb" style="left:467px;top:863px"></div>
<div class="t" style="left:491px;width:45px;text-align:center;top:861px">10</div>
<div class="plus" style="left:544px;top:848px"></div>
<svg style="left:560.500px;top:865px" width="12" height="12" viewBox="0 0 12 12" fill="none" stroke="#333" stroke-width="1.200"><path d="M6 0v12M0 6h12"/></svg>
<div class="t lnk" style="left:593px;top:861px">新菜品0326002</div>
<div class="t" style="left:890px;top:861px">普通菜</div>
<div class="t" style="left:1030px;top:861px">小份</div>
<div class="t" style="left:1170px;top:861px">10.00</div>
<svg style="left:1213.5px;top:864.4px" width="12.500" height="13" viewBox="0 0 12.500 13" fill="none" stroke="#2b2b2b" stroke-width="1.150"><path d="M2.100 9.700L2.500 7.500 8.500 1.500a1 1 0 0 1 1.400 0l1.100 1.100a1 1 0 0 1 0 1.400L5 10 2.800 10.400a.6 .6 0 0 1-.7-.7z" stroke-linejoin="round"/><path d="M.2 12.300h12.200"/></svg>
<div class="t" style="left:1310px;top:861px">9.90</div>
<svg style="left:1345.7px;top:864.4px" width="12.500" height="13" viewBox="0 0 12.500 13" fill="none" stroke="#2b2b2b" stroke-width="1.150"><path d="M2.100 9.700L2.500 7.500 8.500 1.500a1 1 0 0 1 1.400 0l1.100 1.100a1 1 0 0 1 0 1.400L5 10 2.800 10.400a.6 .6 0 0 1-.7-.7z" stroke-linejoin="round"/><path d="M.2 12.300h12.200"/></svg>
<div class="t" style="left:1450px;top:861px">0.00</div>
<svg style="left:1485.7px;top:864.4px" width="12.500" height="13" viewBox="0 0 12.500 13" fill="none" stroke="#2b2b2b" stroke-width="1.150"><path d="M2.100 9.700L2.500 7.500 8.500 1.500a1 1 0 0 1 1.400 0l1.100 1.100a1 1 0 0 1 0 1.400L5 10 2.800 10.400a.6 .6 0 0 1-.7-.7z" stroke-linejoin="round"/><path d="M.2 12.300h12.200"/></svg>
<div class="t" style="left:1590px;top:861px">0.00</div>
<svg style="left:1625.7px;top:864.4px" width="12.500" height="13" viewBox="0 0 12.500 13" fill="none" stroke="#2b2b2b" stroke-width="1.150"><path d="M2.100 9.700L2.500 7.500 8.500 1.500a1 1 0 0 1 1.400 0l1.100 1.100a1 1 0 0 1 0 1.400L5 10 2.800 10.400a.6 .6 0 0 1-.7-.7z" stroke-linejoin="round"/><path d="M.2 12.300h12.200"/></svg>
<div class="t" style="left:1730px;top:861px">-</div>
<svg style="left:1743.2px;top:864.4px" width="12.500" height="13" viewBox="0 0 12.500 13" fill="none" stroke="#2b2b2b" stroke-width="1.150"><path d="M2.100 9.700L2.500 7.500 8.500 1.500a1 1 0 0 1 1.400 0l1.100 1.100a1 1 0 0 1 0 1.400L5 10 2.800 10.400a.6 .6 0 0 1-.7-.7z" stroke-linejoin="round"/><path d="M.2 12.300h12.200"/></svg>
<div class="t" style="left:1870px;top:861px">03260001</div>
<div class="t" style="left:2010px;top:861px">03260002</div>
<div class="t lnk" style="left:2237px;top:861px">编辑</div>
<div class="t lnk" style="left:2281px;top:861px">推广</div>
<div class="t lnk" style="left:2325px;top:861px">设置基础销量</div>
<div class="t lnk" style="left:2425px;top:861px">复制</div>
<div class="cb" style="left:467px;top:913px"></div>
<div class="t" style="left:491px;width:45px;text-align:center;top:911px">11</div>
<div class="plus" style="left:544px;top:898px"></div>
<svg style="left:560.500px;top:915px" width="12" height="12" viewBox="0 0 12 12" fill="none" stroke="#333" stroke-width="1.200"><path d="M6 0v12M0 6h12"/></svg>
<div class="t lnk" style="left:593px;top:911px">菜品08-拼团2</div>
<div class="t" style="left:890px;top:911px">普通菜</div>
<div class="t" style="left:1030px;top:911px">标准</div>
<div class="t" style="left:1170px;top:911px">20.00</div>
<svg style="left:1213.5px;top:914.4px" width="12.500" height="13" viewBox="0 0 12.500 13" fill="none" stroke="#2b2b2b" stroke-width="1.150"><path d="M2.100 9.700L2.500 7.500 8.500 1.500a1 1 0 0 1 1.400 0l1.100 1.100a1 1 0 0 1 0 1.400L5 10 2.800 10.400a.6 .6 0 0 1-.7-.7z" stroke-linejoin="round"/><path d="M.2 12.300h12.200"/></svg>
<div class="t" style="left:1310px;top:911px">0.00</div>
<svg style="left:1345.7px;top:914.4px" width="12.500" height="13" viewBox="0 0 12.500 13" fill="none" stroke="#2b2b2b" stroke-width="1.150"><path d="M2.100 9.700L2.500 7.500 8.500 1.500a1 1 0 0 1 1.400 0l1.100 1.100a1 1 0 0 1 0 1.400L5 10 2.800 10.400a.6 .6 0 0 1-.7-.7z" stroke-linejoin="round"/><path d="M.2 12.300h12.200"/></svg>
<div class="t" style="left:1450px;top:911px">0.00</div>
<svg style="left:1485.7px;top:914.4px" width="12.500" height="13" viewBox="0 0 12.500 13" fill="none" stroke="#2b2b2b" stroke-width="1.150"><path d="M2.100 9.700L2.500 7.500 8.500 1.500a1 1 0 0 1 1.400 0l1.100 1.100a1 1 0 0 1 0 1.400L5 10 2.800 10.400a.6 .6 0 0 1-.7-.7z" stroke-linejoin="round"/><path d="M.2 12.300h12.200"/></svg>
<div class="t" style="left:1590px;top:911px">0.00</div>
<svg style="left:1625.7px;top:914.4px" width="12.500" height="13" viewBox="0 0 12.500 13" fill="none" stroke="#2b2b2b" stroke-width="1.150"><path d="M2.100 9.700L2.500 7.500 8.500 1.500a1 1 0 0 1 1.400 0l1.100 1.100a1 1 0 0 1 0 1.400L5 10 2.800 10.400a.6 .6 0 0 1-.7-.7z" stroke-linejoin="round"/><path d="M.2 12.300h12.200"/></svg>
<div class="t" style="left:1730px;top:911px">-</div>
<svg style="left:1743.2px;top:914.4px" width="12.500" height="13" viewBox="0 0 12.500 13" fill="none" stroke="#2b2b2b" stroke-width="1.150"><path d="M2.100 9.700L2.500 7.500 8.500 1.500a1 1 0 0 1 1.400 0l1.100 1.100a1 1 0 0 1 0 1.400L5 10 2.800 10.400a.6 .6 0 0 1-.7-.7z" stroke-linejoin="round"/><path d="M.2 12.300h12.200"/></svg>
<div class="t" style="left:1870px;top:911px">6661422</div>
<div class="t" style="left:2010px;top:911px">112665</div>
<div class="t lnk" style="left:2237px;top:911px">编辑</div>
<div class="t lnk" style="left:2281px;top:911px">推广</div>
<div class="t lnk" style="left:2325px;top:911px">设置基础销量</div>
<div class="t lnk" style="left:2425px;top:911px">复制</div>
<div class="a" style="left:2508px;top:262px;width:16px;height:685px;background:#f8f9fb;border-left:1px solid #e4e4e4"></div>
<div class="a" style="left:2509px;top:321px;width:15px;height:1px;background:#e4e4e4"></div>
<svg style="left:2514px;top:278px" width="12" height="9" viewBox="0 0 12 9" fill="none" stroke="#1f1f1f" stroke-width="1.400"><rect x=".7" y=".7" width="12" height="7.600"/><path d="M4.200.7v7.600M7.700.7v7.600"/></svg>
<div class="t" style="left:2512px;top:291px;font-size:14px;color:#333">列</div>
</body></html>
